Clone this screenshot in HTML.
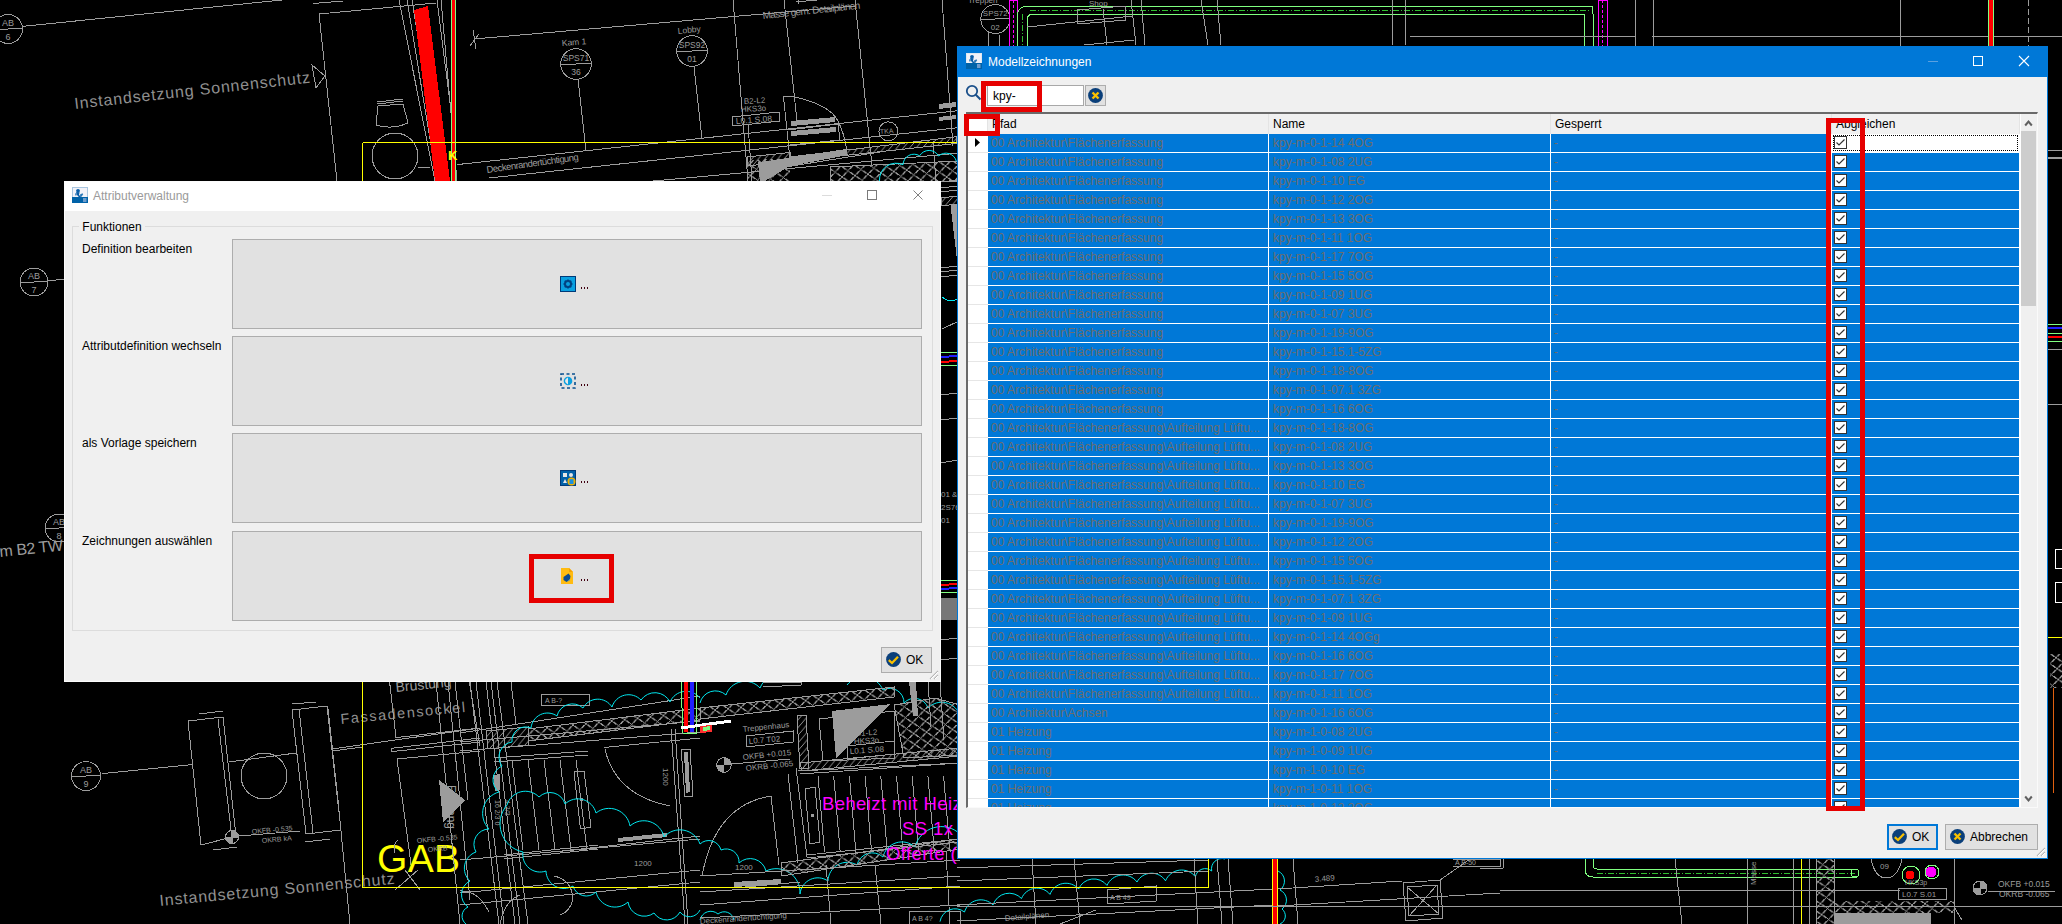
<!DOCTYPE html>
<html><head><meta charset="utf-8"><style>
html,body{margin:0;padding:0}
body{width:2062px;height:924px;position:relative;overflow:hidden;background:#000;font-family:"Liberation Sans",sans-serif;font-size:12px}
.t{position:absolute;white-space:nowrap;line-height:16px}
</style></head><body>
<svg width="2062" height="924" style="position:absolute;left:0;top:0" shape-rendering="crispEdges"><defs><pattern id="xh" width="13" height="11" patternUnits="userSpaceOnUse" patternTransform="rotate(-6)"><path d="M0,0 L13,11 M13,0 L0,11" stroke="#9c9c9c" stroke-width="1"/></pattern><pattern id="dh" width="7" height="7" patternUnits="userSpaceOnUse" patternTransform="rotate(-5)"><path d="M0,7 L7,0" stroke="#9c9c9c" stroke-width="1.3"/></pattern></defs><circle cx="8" cy="29" r="14.5" stroke="#9c9c9c" stroke-width="1" fill="none"/>
<path d="M-6.5,30 L22.5,28" stroke="#9c9c9c" stroke-width="1" fill="none"/>
<text x="8" y="26" font-size="9" fill="#9c9c9c" font-family="Liberation Sans" font-weight="normal" text-anchor="middle" transform="rotate(0 8 26)">AB</text>
<text x="8" y="40" font-size="9" fill="#9c9c9c" font-family="Liberation Sans" font-weight="normal" text-anchor="middle" transform="rotate(0 8 40)">6</text>
<path d="M22.5,26.4 L282,0" stroke="#9c9c9c" stroke-width="1" fill="none"/>
<text x="75" y="109" font-size="16" fill="#909090" font-family="Liberation Sans" font-weight="normal" text-anchor="start" transform="rotate(-6.4 75 109)" textLength="237" lengthAdjust="spacing">Instandsetzung Sonnenschutz</text>
<path d="M312,65 L325,76 L316,88 Z" stroke="#9c9c9c" stroke-width="1" fill="none"/>
<path d="M313,3.5 L343,1" stroke="#9c9c9c" stroke-width="1" fill="none"/>
<path d="M319,14 L436,3" stroke="#9c9c9c" stroke-width="1" fill="none"/>
<path d="M319,14 L337,181" stroke="#9c9c9c" stroke-width="1" fill="none"/>
<path d="M399,0 L435,181" stroke="#9c9c9c" stroke-width="1" fill="none"/>
<path d="M407,0 L437,181" stroke="#9c9c9c" stroke-width="1" fill="none"/>
<path d="M412,0 L441,181" stroke="#9c9c9c" stroke-width="1" fill="none"/>
<path d="M437,0 L451,111" stroke="#9c9c9c" stroke-width="1" fill="none"/>
<path d="M441,0 L457,181" stroke="#9c9c9c" stroke-width="1" fill="none"/>
<polygon points="414,10 428,6 450,181 435,181" fill="#ff0000" stroke="none"/>
<rect x="451" y="0" width="5" height="181" fill="#ff0000"/>
<path d="M451.5,0 L451.5,181" stroke="#80ff80" stroke-width="1" fill="none"/>
<path d="M455.5,0 L455.5,181" stroke="#80ff80" stroke-width="1" fill="none"/>
<path d="M470,46 L479,34" stroke="#9c9c9c" stroke-width="1" fill="none"/>
<path d="M473,30 L476,49" stroke="#9c9c9c" stroke-width="1" fill="none"/>
<path d="M474,39 L855,6" stroke="#9c9c9c" stroke-width="1" fill="none"/>
<text x="562" y="46" font-size="8.5" fill="#9c9c9c" font-family="Liberation Sans" font-weight="normal" text-anchor="start" transform="rotate(-4 562 46)">Kam 1</text>
<circle cx="576" cy="64" r="15.3" stroke="#9c9c9c" stroke-width="1" fill="none"/>
<path d="M560.7,65 L591.3,63" stroke="#9c9c9c" stroke-width="1" fill="none"/>
<text x="576" y="61" font-size="8.5" fill="#9c9c9c" font-family="Liberation Sans" font-weight="normal" text-anchor="middle" transform="rotate(0 576 61)">SPS71</text>
<text x="576" y="75" font-size="8.5" fill="#9c9c9c" font-family="Liberation Sans" font-weight="normal" text-anchor="middle" transform="rotate(0 576 75)">36</text>
<path d="M578,79 L586,151" stroke="#9c9c9c" stroke-width="1" fill="none"/>
<path d="M377,102 L403,99" stroke="#9c9c9c" stroke-width="1" fill="none"/>
<path d="M377,104 L403,101" stroke="#9c9c9c" stroke-width="1" fill="none"/>
<path d="M378,106 L403,104 L408,123 Q392,130 376,125 Z" stroke="#9c9c9c" stroke-width="1" fill="none"/>
<circle cx="395" cy="156" r="23" stroke="#9c9c9c" stroke-width="1" fill="none"/>
<text x="448" y="160" font-size="13" fill="#ffff00" font-family="Liberation Sans" font-weight="bold" text-anchor="start" transform="rotate(0 448 160)">K</text>
<path d="M457,164.6 L960,110.5" stroke="#9c9c9c" stroke-width="1" fill="none"/>
<path d="M489,178 L960,127.5" stroke="#9c9c9c" stroke-width="1" fill="none"/>
<text x="487" y="173" font-size="9.5" fill="#9c9c9c" font-family="Liberation Sans" font-weight="normal" text-anchor="start" transform="rotate(-8 487 173)" textLength="93" lengthAdjust="spacing">Deckenrandertüchtigung</text>
<path d="M418,167 L430,167" stroke="#9c9c9c" stroke-width="1" fill="none"/>
<path d="M733,0 L748,181" stroke="#9c9c9c" stroke-width="1" fill="none"/>
<path d="M784,0 L797,121" stroke="#9c9c9c" stroke-width="1" fill="none"/>
<path d="M855,0 L872,166" stroke="#9c9c9c" stroke-width="1" fill="none"/>
<path d="M942,0 L953,146" stroke="#9c9c9c" stroke-width="1" fill="none"/>
<text x="763" y="19" font-size="10" fill="#9c9c9c" font-family="Liberation Sans" font-weight="normal" text-anchor="start" transform="rotate(-6 763 19)" textLength="98" lengthAdjust="spacing">Masse gem. Detailplänen</text>
<path d="M796,2 L817,0" stroke="#9c9c9c" stroke-width="1" fill="none"/>
<path d="M798,0 L798,4" stroke="#9c9c9c" stroke-width="1" fill="none"/>
<text x="678" y="34" font-size="8.5" fill="#9c9c9c" font-family="Liberation Sans" font-weight="normal" text-anchor="start" transform="rotate(-6 678 34)">Lobby</text>
<circle cx="692" cy="51" r="15.3" stroke="#9c9c9c" stroke-width="1" fill="none"/>
<path d="M676.7,52 L707.3,50" stroke="#9c9c9c" stroke-width="1" fill="none"/>
<text x="692" y="48" font-size="8.5" fill="#9c9c9c" font-family="Liberation Sans" font-weight="normal" text-anchor="middle" transform="rotate(0 692 48)">SPS92</text>
<text x="692" y="62" font-size="8.5" fill="#9c9c9c" font-family="Liberation Sans" font-weight="normal" text-anchor="middle" transform="rotate(0 692 62)">01</text>
<path d="M694,67 L702,139" stroke="#9c9c9c" stroke-width="1" fill="none"/>
<text x="744" y="104" font-size="8" fill="#9c9c9c" font-family="Liberation Sans" font-weight="normal" text-anchor="start" transform="rotate(-3 744 104)">B2-L2</text>
<text x="741" y="112" font-size="8" fill="#9c9c9c" font-family="Liberation Sans" font-weight="normal" text-anchor="start" transform="rotate(-3 741 112)">HKS3o</text>
<path d="M732,117 L779,112 L780,121 L733,126 Z" stroke="#9c9c9c" stroke-width="1" fill="none"/>
<path d="M748,124 L752,181" stroke="#9c9c9c" stroke-width="1" fill="none"/>
<text x="736" y="124" font-size="8.5" fill="#9c9c9c" font-family="Liberation Sans" font-weight="normal" text-anchor="start" transform="rotate(-4 736 124)">L0.1  S.08</text>
<path d="M783,96 L795,97 Q830,105 838,121 Q845,135 847,152" stroke="#9c9c9c" stroke-width="1" fill="none"/>
<path d="M783.5,97 L790,159" stroke="#9c9c9c" stroke-width="1" fill="none"/>
<polygon points="791,121 835,117 835,122 791,126" fill="#9c9c9c" stroke="none"/>
<polygon points="791,131 836,127 836,132 791,136" fill="#9c9c9c" stroke="none"/>
<path d="M788,130 L838,124 L840,140 L790,145" stroke="#9c9c9c" stroke-width="1" fill="none"/>
<circle cx="888.4" cy="131.3" r="9.5" stroke="#9c9c9c" stroke-width="1" fill="none"/>
<text x="880" y="134" font-size="7" fill="#9c9c9c" font-family="Liberation Sans" font-weight="normal" text-anchor="start" transform="rotate(-4 880 134)">TKA</text>
<path d="M653,181 L960,153" stroke="#9c9c9c" stroke-width="1" fill="none"/>
<polygon points="758,162.5 846,149 848,155 790,166 765,181 760,181" fill="#9c9c9c" stroke="none"/>
<polygon points="790,157 956,136.8 956,143.5 790,161.4" fill="url(#dh)" stroke="#9c9c9c"/>
<polygon points="747,157 790,152.5 790,161.4 747,166" fill="url(#dh)" stroke="#9c9c9c"/>
<polygon points="747,160 790,158 790,181 747,181" fill="url(#xh)"/>
<polygon points="830,167 960,161 960,181 830,181" fill="url(#xh)" stroke="#9c9c9c"/>
<path d="M760,171 L880,152" stroke="#9c9c9c" stroke-width="1" fill="none"/>
<polygon points="938.6,104 956.4,102 956.4,107 938.6,109" fill="#9c9c9c" stroke="none"/>
<polygon points="938.6,117 956.4,115 956.4,119 938.6,121" fill="#9c9c9c" stroke="none"/>
<path d="M933,141 L936,181" stroke="#9c9c9c" stroke-width="1" fill="none"/>
<path d="M879.5,181 A16.6,16.6 0 0 1 903,164.7 A10.9,10.9 0 0 1 919.6,155.8 A11.0,11.0 0 0 1 938.6,156 A10.8,10.8 0 0 1 956.4,161.4" stroke="#00e8f0" stroke-width="1" fill="none" shape-rendering="auto"/>
<circle cx="34" cy="282" r="14" stroke="#9c9c9c" stroke-width="1" fill="none"/>
<path d="M20,283 L48,281" stroke="#9c9c9c" stroke-width="1" fill="none"/>
<text x="34" y="279" font-size="9" fill="#9c9c9c" font-family="Liberation Sans" font-weight="normal" text-anchor="middle" transform="rotate(0 34 279)">AB</text>
<text x="34" y="293" font-size="9" fill="#9c9c9c" font-family="Liberation Sans" font-weight="normal" text-anchor="middle" transform="rotate(0 34 293)">7</text>
<path d="M48,281 L64,279" stroke="#9c9c9c" stroke-width="1" fill="none"/>
<circle cx="59" cy="528" r="14" stroke="#9c9c9c" stroke-width="1" fill="none"/>
<path d="M45,529 L73,527" stroke="#9c9c9c" stroke-width="1" fill="none"/>
<text x="59" y="525" font-size="9" fill="#9c9c9c" font-family="Liberation Sans" font-weight="normal" text-anchor="middle" transform="rotate(0 59 525)">AB</text>
<text x="59" y="539" font-size="9" fill="#9c9c9c" font-family="Liberation Sans" font-weight="normal" text-anchor="middle" transform="rotate(0 59 539)">8</text>
<text x="0" y="557" font-size="16" fill="#9c9c9c" font-family="Liberation Sans" font-weight="normal" text-anchor="start" transform="rotate(-6 0 557)" textLength="64" lengthAdjust="spacing">m B2 TW</text>
<circle cx="86" cy="776" r="14.5" stroke="#9c9c9c" stroke-width="1" fill="none"/>
<path d="M71.5,777 L100.5,775" stroke="#9c9c9c" stroke-width="1" fill="none"/>
<text x="86" y="773" font-size="9" fill="#9c9c9c" font-family="Liberation Sans" font-weight="normal" text-anchor="middle" transform="rotate(0 86 773)">AB</text>
<text x="86" y="787" font-size="9" fill="#9c9c9c" font-family="Liberation Sans" font-weight="normal" text-anchor="middle" transform="rotate(0 86 787)">9</text>
<path d="M101.6,773.7 L192.7,764.5" stroke="#9c9c9c" stroke-width="1" fill="none"/>
<path d="M188,721 L223,717 L236,836 L201,845 Z" stroke="#9c9c9c" stroke-width="1" fill="none"/>
<path d="M218,719 L232,838" stroke="#9c9c9c" stroke-width="1" fill="none"/>
<path d="M199,714 L223,711" stroke="#9c9c9c" stroke-width="1" fill="none"/>
<path d="M213,850 L237,847" stroke="#9c9c9c" stroke-width="1" fill="none"/>
<circle cx="264" cy="776" r="23" stroke="#9c9c9c" stroke-width="1" fill="none"/>
<path d="M229,762 L296,753" stroke="#9c9c9c" stroke-width="1" fill="none"/>
<path d="M292,710 L327,706 L341,830 L306,834 Z" stroke="#9c9c9c" stroke-width="1" fill="none"/>
<path d="M299,709 L313,833" stroke="#9c9c9c" stroke-width="1" fill="none"/>
<path d="M292,704 L316,702" stroke="#9c9c9c" stroke-width="1" fill="none"/>
<path d="M305,842 L330,839" stroke="#9c9c9c" stroke-width="1" fill="none"/>
<path d="M332,751 L363,747" stroke="#9c9c9c" stroke-width="1" fill="none"/>
<circle cx="232" cy="837" r="6.5" stroke="#9c9c9c" stroke-width="1" fill="none"/>
<path d="M232,830.5 A6.5,6.5 0 0 1 238.5,837 L232,837 Z M232,843.5 A6.5,6.5 0 0 1 225.5,837 L232,837 Z" fill="#9c9c9c"/>
<path d="M225.5,837 L238.5,837" stroke="#9c9c9c" stroke-width="1" fill="none"/>
<path d="M232,830.5 L232,843.5" stroke="#9c9c9c" stroke-width="1" fill="none"/>
<path d="M239,836 L300,831" stroke="#9c9c9c" stroke-width="1" fill="none"/>
<text x="252" y="834" font-size="7" fill="#9c9c9c" font-family="Liberation Sans" font-weight="normal" text-anchor="start" transform="rotate(-5 252 834)">OKFB -0.535</text>
<text x="262" y="843" font-size="7" fill="#9c9c9c" font-family="Liberation Sans" font-weight="normal" text-anchor="start" transform="rotate(-5 262 843)">OKRB kA</text>
<text x="341" y="724" font-size="14.5" fill="#909090" font-family="Liberation Sans" font-weight="normal" text-anchor="start" transform="rotate(-5.5 341 724)" textLength="125" lengthAdjust="spacing">Fassadensockel</text>
<text x="396" y="692" font-size="14" fill="#9c9c9c" font-family="Liberation Sans" font-weight="normal" text-anchor="start" transform="rotate(-5.5 396 692)">Brüstung</text>
<text x="160" y="906" font-size="16" fill="#909090" font-family="Liberation Sans" font-weight="normal" text-anchor="start" transform="rotate(-5.4 160 906)" textLength="236" lengthAdjust="spacing">Instandsetzung Sonnenschutz</text>
<path d="M320,707 L327.7,706" stroke="#9c9c9c" stroke-width="1" fill="none"/>
<path d="M327.7,706 L338,800" stroke="#9c9c9c" stroke-width="1" fill="none"/>
<path d="M338,800 L350,924" stroke="#9c9c9c" stroke-width="1" fill="none"/>
<path d="M332,749 L480,728" stroke="#9c9c9c" stroke-width="1" fill="none"/>
<path d="M389.6,682 L396,737.6" stroke="#9c9c9c" stroke-width="1" fill="none"/>
<path d="M396,737.6 L480,728" stroke="#9c9c9c" stroke-width="1" fill="none"/>
<path d="M391,748.4 L480,738" stroke="#9c9c9c" stroke-width="1" fill="none"/>
<path d="M392,751.6 L480,742" stroke="#9c9c9c" stroke-width="1" fill="none"/>
<path d="M391,748.4 L392,751.6" stroke="#9c9c9c" stroke-width="1" fill="none"/>
<path d="M480,751 L397,759 L412,872" stroke="#9c9c9c" stroke-width="1" fill="none"/>
<path d="M455,682 L468,800" stroke="#9c9c9c" stroke-width="1" fill="none"/>
<path d="M469.4,682 L480,746" stroke="#9c9c9c" stroke-width="1" fill="none"/>
<path d="M0,924 L0,924" stroke="#9c9c9c" stroke-width="1" fill="none"/>
<text x="377" y="872" font-size="39" fill="#ffff00" font-family="Liberation Sans" font-weight="normal" text-anchor="start" transform="rotate(0 377 872)" textLength="83" lengthAdjust="spacing">GAB</text>
<polygon points="439,780 465,800 443,822" fill="#9c9c9c" stroke="none"/>
<text x="447" y="785" font-size="12" fill="#9c9c9c" font-family="Liberation Sans" font-weight="normal" text-anchor="start" transform="rotate(90 447 785)">Eingang</text>
<text x="417" y="843" font-size="7" fill="#9c9c9c" font-family="Liberation Sans" font-weight="normal" text-anchor="start" transform="rotate(-5 417 843)">OKFB -0.535</text>
<text x="428" y="852" font-size="7" fill="#9c9c9c" font-family="Liberation Sans" font-weight="normal" text-anchor="start" transform="rotate(-5 428 852)">OKRB -</text>
<path d="M395,853 Q392,845 398,840" stroke="#9c9c9c" stroke-width="1" fill="none"/>
<path d="M405,870 L420,890" stroke="#9c9c9c" stroke-width="1" fill="none"/>
<path d="M395,890 L418,870" stroke="#9c9c9c" stroke-width="1" fill="none"/>
<path d="M470,682 L499,924" stroke="#9c9c9c" stroke-width="1" fill="none"/>
<path d="M476,682 L504,924" stroke="#9c9c9c" stroke-width="1" fill="none"/>
<path d="M486,682 L515,924" stroke="#9c9c9c" stroke-width="1" fill="none"/>
<path d="M491,682 L520,924" stroke="#9c9c9c" stroke-width="1" fill="none"/>
<path d="M497,682 L528,924" stroke="#9c9c9c" stroke-width="1" fill="none"/>
<path d="M511,682 L516,724" stroke="#9c9c9c" stroke-width="1" fill="none"/>
<path d="M436,682 L460,924" stroke="#9c9c9c" stroke-width="1" fill="none"/>
<path d="M448,682 L470,900" stroke="#9c9c9c" stroke-width="1" fill="none"/>
<polygon points="528,729 700,708 700,720 528,741" fill="url(#xh)" stroke="#9c9c9c"/>
<polygon points="486,731 528,727 528,745 488,749" fill="url(#dh)" stroke="#9c9c9c"/>
<path d="M460,733 L700,696" stroke="#9c9c9c" stroke-width="1" fill="none"/>
<path d="M460,742 L700,721" stroke="#9c9c9c" stroke-width="1" fill="none"/>
<path d="M460,751 L700,732" stroke="#9c9c9c" stroke-width="1" fill="none"/>
<path d="M541,694.6 L589.7,694.6 L589.7,705 L541,705 Z" stroke="#9c9c9c" stroke-width="1" fill="none"/>
<text x="545" y="703" font-size="7" fill="#9c9c9c" font-family="Liberation Sans" font-weight="normal" text-anchor="start" transform="rotate(0 545 703)">A B-?</text>
<path d="M494,758 L588,751" stroke="#9c9c9c" stroke-width="1" fill="none"/>
<path d="M494,762 L588,755" stroke="#9c9c9c" stroke-width="1" fill="none"/>
<path d="M604,747.5 L700,738" stroke="#9c9c9c" stroke-width="1" fill="none"/>
<path d="M512,760 L523,850" stroke="#9c9c9c" stroke-width="1" fill="none"/>
<path d="M528,760 L539,850" stroke="#9c9c9c" stroke-width="1" fill="none"/>
<path d="M544,760 L555,850" stroke="#9c9c9c" stroke-width="1" fill="none"/>
<path d="M560,760 L571,850" stroke="#9c9c9c" stroke-width="1" fill="none"/>
<path d="M576,760 L587,850" stroke="#9c9c9c" stroke-width="1" fill="none"/>
<path d="M574,772 L584,771 L591,827 L580.5,829 Z" stroke="#9c9c9c" stroke-width="1" fill="none"/>
<rect x="580" y="798" width="3" height="3" fill="#9c9c9c"/>
<path d="M504,855 L598,845" stroke="#9c9c9c" stroke-width="1" fill="none"/>
<path d="M504,859 L598,849" stroke="#9c9c9c" stroke-width="1" fill="none"/>
<path d="M460,860 L700,839" stroke="#9c9c9c" stroke-width="1" fill="none"/>
<path d="M605,749 Q615,795 670,806" stroke="#9c9c9c" stroke-width="1" fill="none"/>
<path d="M681,749 L690,749 L693,796 L685,797 Z" stroke="#9c9c9c" stroke-width="1" fill="none"/>
<polygon points="684,752 688,752 690,792 686,793" fill="#9c9c9c" stroke="none"/>
<text x="663" y="768" font-size="8" fill="#9c9c9c" font-family="Liberation Sans" font-weight="normal" text-anchor="start" transform="rotate(90 663 768)">1200</text>
<polygon points="618,838 667,833 667,837 618,842" fill="#9c9c9c" stroke="none"/>
<path d="M553,852 L700,836" stroke="#9c9c9c" stroke-width="1" fill="none"/>
<text x="634" y="866" font-size="8" fill="#9c9c9c" font-family="Liberation Sans" font-weight="normal" text-anchor="start" transform="rotate(0 634 866)">1200</text>
<path d="M671,729 L685,924" stroke="#9c9c9c" stroke-width="1" fill="none"/>
<path d="M675,729 L688,924" stroke="#9c9c9c" stroke-width="1" fill="none"/>
<polygon points="493,775 500,774 500,790 495,791" fill="#9c9c9c" stroke="none"/>
<text x="495" y="800" font-size="7" fill="#9c9c9c" font-family="Liberation Sans" font-weight="normal" text-anchor="start" transform="rotate(90 495 800)">16 2/3 0</text>
<text x="505" y="800" font-size="7" fill="#9c9c9c" font-family="Liberation Sans" font-weight="normal" text-anchor="start" transform="rotate(90 505 800)">4 2/3</text>
<path d="M460,893 L700,870" stroke="#9c9c9c" stroke-width="1" fill="none"/>
<path d="M460,905 L700,882" stroke="#9c9c9c" stroke-width="1" fill="none"/>
<path d="M460,891 Q478,890 489,912" stroke="#9c9c9c" stroke-width="1" fill="none"/>
<path d="M554,876 Q572,880 573,899 Q570,912 560,915" stroke="#9c9c9c" stroke-width="1" fill="none"/>
<path d="M500,924 Q505,900 520,895" stroke="#9c9c9c" stroke-width="1" fill="none"/>
<path d="M700,698 A17.6,17.6 0 0 0 670,702 A16.9,16.9 0 0 0 641,700 A17.3,17.3 0 0 0 612,707 A16.8,16.8 0 0 0 583,708 A15.8,15.8 0 0 0 557,716 A16.6,16.6 0 0 0 531,728 A13.7,13.7 0 0 0 512,742 A15.1,15.1 0 0 0 502,766 A15.2,15.2 0 0 0 499,792 A22.2,22.2 0 0 0 489,829 A15.3,15.3 0 0 0 476,852 A17.2,17.2 0 0 0 470,881 A15.1,15.1 0 0 0 468,907 A9.9,9.9 0 0 0 466,924" stroke="#00e8f0" stroke-width="1" fill="none" shape-rendering="auto"/>
<path d="M507,805 A19.1,19.1 0 0 1 539,797 A15.6,15.6 0 0 1 565,804 A18.7,18.7 0 0 1 596,813 A21.1,21.1 0 0 1 630,826 A20.7,20.7 0 0 1 664,837 A21.3,21.3 0 0 1 700,844" stroke="#00e8f0" stroke-width="1" fill="none" shape-rendering="auto"/>
<path d="M507,805 A28.8,28.8 0 0 0 523,852 A17.3,17.3 0 0 0 546,871 A17.9,17.9 0 0 0 573,886 A13.8,13.8 0 0 0 596,892 A19.4,19.4 0 0 0 628,902 A16.4,16.4 0 0 0 654,913 A15.1,15.1 0 0 0 680,912 A11.7,11.7 0 0 0 700,910" stroke="#00e8f0" stroke-width="1" fill="none" shape-rendering="auto"/>
<rect x="684" y="682" width="4" height="50" fill="#ff0000"/>
<rect x="690" y="682" width="4" height="50" fill="#2020ff"/>
<path d="M681,682 L683,733 L696,733 L696,682" stroke="#80ff80" stroke-width="1" fill="none"/>
<path d="M681,728 L731,721" stroke="#ffffff" stroke-width="3" fill="none"/>
<polygon points="700,726 712,725 712,732 700,733" fill="#ff3030" stroke="none"/>
<polygon points="703,727 710,726 710,730 703,731" fill="#80ff80" stroke="none"/>
<path d="M700,703 A15.8,15.8 0 0 1 726,695 A20.1,20.1 0 0 1 760,688 A26.3,26.3 0 0 1 805,682" stroke="#00e8f0" stroke-width="1" fill="none" shape-rendering="auto"/>
<path d="M847,685 A21.1,21.1 0 0 1 883,690 A14.3,14.3 0 0 1 904,703 A14.2,14.2 0 0 1 928,708 A19.1,19.1 0 0 1 960,716" stroke="#00e8f0" stroke-width="1" fill="none" shape-rendering="auto"/>
<polygon points="700,708 894,687 894,697 700,719" fill="url(#xh)" stroke="#9c9c9c"/>
<polygon points="894,705 935,698 960,705 960,755 904,758" fill="url(#xh)" stroke="#9c9c9c"/>
<polygon points="797,716 806,715 809,768 800,769" fill="url(#dh)" stroke="#9c9c9c"/>
<polygon points="800,763 960,748 960,756 802,771" fill="url(#dh)" stroke="#9c9c9c"/>
<path d="M798,771 L960,763" stroke="#9c9c9c" stroke-width="1" fill="none"/>
<text x="743" y="732" font-size="8" fill="#9c9c9c" font-family="Liberation Sans" font-weight="normal" text-anchor="start" transform="rotate(-6 743 732)">Treppenhaus</text>
<path d="M746,736 L793,731 L793,742 L746,747 Z" stroke="#9c9c9c" stroke-width="1" fill="none"/>
<text x="749" y="744" font-size="8" fill="#9c9c9c" font-family="Liberation Sans" font-weight="normal" text-anchor="start" transform="rotate(-5 749 744)">L0.7  T02</text>
<circle cx="724" cy="765" r="7.3" stroke="#9c9c9c" stroke-width="1" fill="none"/>
<path d="M724,758 A7.3,7.3 0 0 1 731.3,765 L724,765 Z M724,772.3 A7.3,7.3 0 0 1 716.7,765 L724,765 Z" fill="#9c9c9c"/>
<path d="M731,764 L790,759" stroke="#9c9c9c" stroke-width="1" fill="none"/>
<text x="743" y="760" font-size="8" fill="#9c9c9c" font-family="Liberation Sans" font-weight="normal" text-anchor="start" transform="rotate(-6 743 760)">OKFB +0.015</text>
<text x="746" y="771" font-size="8" fill="#9c9c9c" font-family="Liberation Sans" font-weight="normal" text-anchor="start" transform="rotate(-6 746 771)">OKRB -0.065</text>
<path d="M702,876 Q715,805 771,796 L779,865" stroke="#9c9c9c" stroke-width="1" fill="none"/>
<path d="M788,774 L798,863" stroke="#9c9c9c" stroke-width="1" fill="none"/>
<path d="M796,768 L807,857" stroke="#9c9c9c" stroke-width="1" fill="none"/>
<path d="M805,789 L815,787 L820,842 L810,844 Z" stroke="#9c9c9c" stroke-width="1" fill="none"/>
<rect x="811" y="814" width="3" height="3" fill="#9c9c9c"/>
<path d="M818.0,776 L824.5,852" stroke="#9c9c9c" stroke-width="1" fill="none"/>
<path d="M833.7,776 L840.2,852" stroke="#9c9c9c" stroke-width="1" fill="none"/>
<path d="M849.4,776 L855.9,852" stroke="#9c9c9c" stroke-width="1" fill="none"/>
<path d="M865.1,776 L871.6,852" stroke="#9c9c9c" stroke-width="1" fill="none"/>
<path d="M880.8,776 L887.3,852" stroke="#9c9c9c" stroke-width="1" fill="none"/>
<path d="M896.5,776 L903.0,852" stroke="#9c9c9c" stroke-width="1" fill="none"/>
<path d="M912.2,776 L918.7,852" stroke="#9c9c9c" stroke-width="1" fill="none"/>
<path d="M927.9,776 L934.4,852" stroke="#9c9c9c" stroke-width="1" fill="none"/>
<path d="M943.6,776 L950.1,852" stroke="#9c9c9c" stroke-width="1" fill="none"/>
<path d="M800,774 L960,763" stroke="#9c9c9c" stroke-width="1" fill="none"/>
<path d="M807,855 L960,839" stroke="#9c9c9c" stroke-width="1" fill="none"/>
<path d="M807,858 L960,842" stroke="#9c9c9c" stroke-width="1" fill="none"/>
<polygon points="832,711 891,704 836,758" fill="#9c9c9c" stroke="none"/>
<path d="M819,719 L894,711 L895,758 L823,761 Z" stroke="#9c9c9c" stroke-width="1" fill="none"/>
<text x="856" y="736" font-size="8" fill="#9c9c9c" font-family="Liberation Sans" font-weight="normal" text-anchor="start" transform="rotate(-3 856 736)">B1-L2</text>
<text x="854" y="744" font-size="8" fill="#9c9c9c" font-family="Liberation Sans" font-weight="normal" text-anchor="start" transform="rotate(-3 854 744)">HKS3o</text>
<path d="M847,746 L894,741 L894,754 L848,759 Z" stroke="#9c9c9c" stroke-width="1" fill="none"/>
<text x="850" y="754" font-size="8" fill="#9c9c9c" font-family="Liberation Sans" font-weight="normal" text-anchor="start" transform="rotate(-4 850 754)">L0.1  S.08</text>
<polygon points="909,682 916,682 918,716 913,716" fill="#9c9c9c" stroke="none"/>
<path d="M928,682 L931,727" stroke="#9c9c9c" stroke-width="1" fill="none"/>
<path d="M940,682 L944,740" stroke="#9c9c9c" stroke-width="1" fill="none"/>
<path d="M700,844 A12.7,12.7 0 0 1 721,850 A12.9,12.9 0 0 1 739,863 A16.3,16.3 0 0 1 766,871 A23.8,23.8 0 0 1 800,894 A17.9,17.9 0 0 1 828,881 A19.2,19.2 0 0 1 857,865 A15.8,15.8 0 0 1 883,857 A19.4,19.4 0 0 1 915,847 A27.2,27.2 0 0 1 960,834" stroke="#00e8f0" stroke-width="1" fill="none" shape-rendering="auto"/>
<path d="M700,920 A11.0,11.0 0 0 1 718,914 A9.9,9.9 0 0 1 734,920" stroke="#00e8f0" stroke-width="1" fill="none" shape-rendering="auto"/>
<polygon points="781,863 960,839 960,849 781,876" fill="url(#xh)" stroke="#9c9c9c"/>
<path d="M700,876 L960,860" stroke="#9c9c9c" stroke-width="1" fill="none"/>
<path d="M700,892 L960,876" stroke="#9c9c9c" stroke-width="1" fill="none"/>
<path d="M700,905 L960,886" stroke="#9c9c9c" stroke-width="1" fill="none"/>
<path d="M700,918 L960,905" stroke="#9c9c9c" stroke-width="1" fill="none"/>
<path d="M826,865 L831,924" stroke="#9c9c9c" stroke-width="1" fill="none"/>
<path d="M875,865 L881,924" stroke="#9c9c9c" stroke-width="1" fill="none"/>
<path d="M946,852 L950,924" stroke="#9c9c9c" stroke-width="1" fill="none"/>
<text x="735" y="870" font-size="8" fill="#9c9c9c" font-family="Liberation Sans" font-weight="normal" text-anchor="start" transform="rotate(0 735 870)">1200</text>
<polygon points="734,882 781,879 781,884 734,887" fill="#9c9c9c" stroke="none"/>
<path d="M734,888 L800,882" stroke="#9c9c9c" stroke-width="1" fill="none"/>
<rect x="909" y="911" width="51" height="13" fill="none" stroke="#9c9c9c"/>
<text x="912" y="921" font-size="7" fill="#9c9c9c" font-family="Liberation Sans" font-weight="normal" text-anchor="start" transform="rotate(0 912 921)">A B 4?</text>
<text x="700" y="924" font-size="8" fill="#9c9c9c" font-family="Liberation Sans" font-weight="normal" text-anchor="start" transform="rotate(-4 700 924)">Deckenrandertüchtigung</text>
<path d="M763,682 L801,682 L801,685 L763,687" stroke="#9c9c9c" stroke-width="1" fill="none"/>
<text x="822" y="810" font-size="18.5" fill="#ff00ff" font-family="Liberation Sans" font-weight="normal" text-anchor="start" transform="rotate(0 822 810)" letter-spacing="0.4">Beheizt mit Heizkörper</text>
<text x="902" y="835" font-size="18.5" fill="#ff00ff" font-family="Liberation Sans" font-weight="normal" text-anchor="start" transform="rotate(0 902 835)" letter-spacing="0.4">SS 1x</text>
<text x="886" y="860" font-size="18.5" fill="#ff00ff" font-family="Liberation Sans" font-weight="normal" text-anchor="start" transform="rotate(0 886 860)" letter-spacing="0.4">Offerte (</text>
<path d="M941,182 L957,180" stroke="#9c9c9c" stroke-width="1" fill="none"/>
<path d="M941,188 L957,186" stroke="#9c9c9c" stroke-width="1" fill="none"/>
<path d="M941,192 L957,190" stroke="#9c9c9c" stroke-width="1" fill="none"/>
<polygon points="941,198 957,196 957,204 941,206" fill="url(#dh)" stroke="#9c9c9c"/>
<polygon points="950.5,205 957,205 957,260" fill="#9c9c9c" stroke="none"/>
<path d="M941,268 L957,266" stroke="#9c9c9c" stroke-width="1" fill="none"/>
<path d="M941,272 L957,270" stroke="#9c9c9c" stroke-width="1" fill="none"/>
<path d="M941,277 L957,275" stroke="#9c9c9c" stroke-width="1" fill="none"/>
<path d="M941.7,296.8 Q951,304 957,298.8" stroke="#00e8f0" stroke-width="1" fill="none"/>
<path d="M941.7,329 L957,322" stroke="#9c9c9c" stroke-width="1" fill="none"/>
<path d="M941,353 L957,352" stroke="#80ff80" stroke-width="1" fill="none"/>
<path d="M941,357 L957,356" stroke="#2020ff" stroke-width="2" fill="none"/>
<path d="M941,362 L957,361" stroke="#ff0000" stroke-width="2" fill="none"/>
<path d="M941,366 L957,365" stroke="#80ff80" stroke-width="1" fill="none"/>
<path d="M941,395 L957,393" stroke="#9c9c9c" stroke-width="1" fill="none"/>
<path d="M941,420 L957,418" stroke="#9c9c9c" stroke-width="1" fill="none"/>
<path d="M941,463 L957,460" stroke="#9c9c9c" stroke-width="1" fill="none"/>
<text x="941" y="497" font-size="8" fill="#9c9c9c" font-family="Liberation Sans" font-weight="normal" text-anchor="start" transform="rotate(0 941 497)">01 &</text>
<text x="941" y="510" font-size="8" fill="#9c9c9c" font-family="Liberation Sans" font-weight="normal" text-anchor="start" transform="rotate(0 941 510)">2S76</text>
<text x="941" y="523" font-size="8" fill="#9c9c9c" font-family="Liberation Sans" font-weight="normal" text-anchor="start" transform="rotate(0 941 523)">01</text>
<path d="M941,581 L957,580" stroke="#80ff80" stroke-width="1" fill="none"/>
<path d="M941,585 L957,584" stroke="#ff0000" stroke-width="2" fill="none"/>
<path d="M941,589 L957,588" stroke="#2020ff" stroke-width="2" fill="none"/>
<path d="M941,593 L957,592" stroke="#80ff80" stroke-width="1" fill="none"/>
<rect x="941" y="598" width="16" height="22" fill="#777"/>
<path d="M941,640 L957,638" stroke="#9c9c9c" stroke-width="1" fill="none"/>
<path d="M941,660 L957,658" stroke="#9c9c9c" stroke-width="1" fill="none"/>
<circle cx="995.3" cy="19" r="14.5" stroke="#9c9c9c" stroke-width="1" fill="none"/>
<path d="M980.8,20 L1009.8,18" stroke="#9c9c9c" stroke-width="1" fill="none"/>
<text x="995.3" y="16" font-size="8" fill="#9c9c9c" font-family="Liberation Sans" font-weight="normal" text-anchor="middle" transform="rotate(0 995.3 16)">SPS72</text>
<text x="995.3" y="30" font-size="8" fill="#9c9c9c" font-family="Liberation Sans" font-weight="normal" text-anchor="middle" transform="rotate(0 995.3 30)">02</text>
<rect x="1009" y="0" width="8" height="46" fill="none" stroke="#ff00ff"/>
<path d="M1013,0 L1013,46" stroke="#ff00ff" stroke-width="1" fill="none" stroke-dasharray="3 2"/>
<path d="M1017,46 L1017,18 Q1017,6 1029,6 L1592,6 Q1593,6 1593,14 L1593,46" stroke="#80ff80" stroke-width="1" fill="none"/>
<path d="M1027,46 L1027,20 Q1027,14 1033,14 L1584,14 L1584,46" stroke="#80ff80" stroke-width="1" fill="none"/>
<path d="M1030,10.5 L1590,10.5" stroke="#30c030" stroke-width="1" fill="none" stroke-dasharray="6 2 1 2"/>
<path d="M1022.5,14 L1022.5,46" stroke="#30c030" stroke-width="1" fill="none" stroke-dasharray="6 2 1 2"/>
<rect x="1598" y="0" width="9" height="46" fill="none" stroke="#ff00ff"/>
<path d="M1602,0 L1602,46" stroke="#ff00ff" stroke-width="1" fill="none" stroke-dasharray="3 2"/>
<path d="M1027,27 L1133,16" stroke="#9c9c9c" stroke-width="1" fill="none"/>
<path d="M1077,10 L1125,6 L1126,20 L1078,24 Z" stroke="#9c9c9c" stroke-width="1" fill="none"/>
<text x="1089" y="6" font-size="8" fill="#9c9c9c" font-family="Liberation Sans" font-weight="normal" text-anchor="start" transform="rotate(0 1089 6)">Shop</text>
<path d="M1103,9 L1107,45" stroke="#9c9c9c" stroke-width="1" fill="none"/>
<path d="M1131,0 L1136,45" stroke="#9c9c9c" stroke-width="1" fill="none"/>
<path d="M1141,0 L1145,45" stroke="#9c9c9c" stroke-width="1" fill="none"/>
<path d="M1201,0 L1208,45" stroke="#9c9c9c" stroke-width="1" fill="none"/>
<path d="M1217,0 L1221,45" stroke="#9c9c9c" stroke-width="1" fill="none"/>
<path d="M1392,0 L1392,45" stroke="#9c9c9c" stroke-width="1" fill="none"/>
<path d="M1405,0 L1405,45" stroke="#9c9c9c" stroke-width="1" fill="none"/>
<path d="M1410,36 L1635,36" stroke="#9c9c9c" stroke-width="1" fill="none"/>
<path d="M1652,36 L2062,36" stroke="#9c9c9c" stroke-width="1" fill="none"/>
<path d="M1635,0 L1635,46" stroke="#9c9c9c" stroke-width="1" fill="none"/>
<path d="M1653,0 L1653,46" stroke="#9c9c9c" stroke-width="1" fill="none"/>
<path d="M1900,0 L1900,46" stroke="#9c9c9c" stroke-width="1" fill="none"/>
<path d="M2028,0 L2028,46" stroke="#9c9c9c" stroke-width="1" fill="none" stroke-dasharray="6 3"/>
<rect x="1989" y="0" width="4" height="46" fill="#ff0000"/>
<path d="M1988.5,0 L1988.5,46" stroke="#80ff80" stroke-width="1" fill="none"/>
<path d="M1993.5,0 L1993.5,46" stroke="#80ff80" stroke-width="1" fill="none"/>
<path d="M1084,45 L1134,40" stroke="#9c9c9c" stroke-width="1" fill="none"/>
<text x="968" y="3" font-size="8" fill="#9c9c9c" font-family="Liberation Sans" font-weight="normal" text-anchor="start" transform="rotate(0 968 3)">Treppen</text>
<path d="M988,31 L988,46" stroke="#9c9c9c" stroke-width="1" fill="none"/>
<path d="M999,35 L999,46" stroke="#9c9c9c" stroke-width="1" fill="none"/>
<path d="M2048,150 L2062,150" stroke="#9c9c9c" stroke-width="1" fill="none"/>
<path d="M2048,158 L2062,158" stroke="#9c9c9c" stroke-width="2" fill="none"/>
<path d="M2048,324 L2062,324" stroke="#80ff80" stroke-width="1" fill="none"/>
<path d="M2048,328 L2062,328" stroke="#2020ff" stroke-width="2" fill="none"/>
<path d="M2048,333 L2062,333" stroke="#80ff80" stroke-width="1" fill="none"/>
<path d="M2048,337 L2062,337" stroke="#ff0000" stroke-width="2" fill="none"/>
<path d="M2048,341 L2062,341" stroke="#80ff80" stroke-width="1" fill="none"/>
<path d="M2048,349 L2062,349" stroke="#9c9c9c" stroke-width="1" fill="none"/>
<path d="M2048,404 L2062,404" stroke="#9c9c9c" stroke-width="1" fill="none"/>
<rect x="2055" y="549" width="8" height="19" fill="none" stroke="#fff"/>
<rect x="2055" y="582" width="8" height="20" fill="none" stroke="#fff"/>
<path d="M2048,637 L2062,637" stroke="#ffff00" stroke-width="1" fill="none"/>
<rect x="2050" y="654" width="12" height="34" fill="url(#xh)"/>
<path d="M2053,688 L2053,793" stroke="#e06010" stroke-width="1" fill="none"/>
<path d="M940,921.6 A15.3,15.3 0 0 1 964.5,912 A17.0,17.0 0 0 1 993,905 A17.0,17.0 0 0 1 1021.5,898.5 A16.7,16.7 0 0 1 1050,894.4 A16.9,16.9 0 0 1 1078.6,889 A16.6,16.6 0 0 1 1107,885.4 A17.5,17.5 0 0 1 1137,882 A16.5,16.5 0 0 1 1165.5,880.8 A17.5,17.5 0 0 1 1195.4,876.7 A10.0,10.0 0 0 1 1211.7,871 A10.4,10.4 0 0 1 1225,859" stroke="#00e8f0" stroke-width="1" fill="none" shape-rendering="auto"/>
<path d="M1278,871 A11.1,11.1 0 0 1 1280,890 A11.1,11.1 0 0 1 1282,909 A8.8,8.8 0 0 1 1280,924" stroke="#00e8f0" stroke-width="1" fill="none" shape-rendering="auto"/>
<path d="M957,868 L1209,860" stroke="#9c9c9c" stroke-width="1" fill="none"/>
<path d="M957,881 L1209,871" stroke="#9c9c9c" stroke-width="1" fill="none"/>
<path d="M957,905 L1274,889" stroke="#9c9c9c" stroke-width="1" fill="none"/>
<path d="M957,921 L1274,905" stroke="#9c9c9c" stroke-width="1" fill="none"/>
<path d="M1277,889 L1402,881" stroke="#9c9c9c" stroke-width="1" fill="none"/>
<path d="M1277,906 L1500,893" stroke="#9c9c9c" stroke-width="1" fill="none"/>
<path d="M1032,859 L1036,924" stroke="#9c9c9c" stroke-width="1" fill="none"/>
<path d="M1074,859 L1080,924" stroke="#9c9c9c" stroke-width="1" fill="none"/>
<path d="M1194,859 L1198,924" stroke="#9c9c9c" stroke-width="1" fill="none"/>
<path d="M1217,859 L1222,924" stroke="#9c9c9c" stroke-width="1" fill="none"/>
<path d="M1228,859 L1233,924" stroke="#9c9c9c" stroke-width="1" fill="none"/>
<path d="M1293,859 L1298,924" stroke="#9c9c9c" stroke-width="1" fill="none"/>
<path d="M1107,890 L1156,886 L1156,901 L1108,904 Z" stroke="#9c9c9c" stroke-width="1" fill="none"/>
<text x="1110" y="900" font-size="7" fill="#9c9c9c" font-family="Liberation Sans" font-weight="normal" text-anchor="start" transform="rotate(0 1110 900)">A B 49</text>
<path d="M1453,859 L1500,859 L1500,866 L1453,866" stroke="#9c9c9c" stroke-width="1" fill="none"/>
<text x="1455" y="865" font-size="7" fill="#9c9c9c" font-family="Liberation Sans" font-weight="normal" text-anchor="start" transform="rotate(0 1455 865)">A B-50</text>
<path d="M1403,883 L1440,880 L1443,918 L1406,921 Z" stroke="#9c9c9c" stroke-width="1" fill="none"/>
<path d="M1407,887 L1437,885 L1439,914 L1409,916 Z" stroke="#9c9c9c" stroke-width="1" fill="none"/>
<path d="M1407,887 L1439,914" stroke="#9c9c9c" stroke-width="1" fill="none"/>
<path d="M1437,885 L1409,916" stroke="#9c9c9c" stroke-width="1" fill="none"/>
<path d="M1440,880 L1470,859" stroke="#9c9c9c" stroke-width="1" fill="none"/>
<rect x="1273" y="859" width="4" height="65" fill="#ff0000"/>
<path d="M1272.5,859 L1272.5,924" stroke="#ffff00" stroke-width="1" fill="none"/>
<path d="M1277.5,859 L1277.5,924" stroke="#ffff00" stroke-width="1" fill="none"/>
<text x="1315" y="882" font-size="8" fill="#9c9c9c" font-family="Liberation Sans" font-weight="normal" text-anchor="start" transform="rotate(-5 1315 882)">3.489</text>
<text x="1005" y="921" font-size="8" fill="#9c9c9c" font-family="Liberation Sans" font-weight="normal" text-anchor="start" transform="rotate(-5 1005 921)">Detailplänen</text>
<path d="M1060,924 L1096,910" stroke="#9c9c9c" stroke-width="1" fill="none"/>
<path d="M1585,859 L1585,869 Q1585,877 1593,877 L1857,877" stroke="#80ff80" stroke-width="1" fill="none"/>
<path d="M1593,859 L1593,866 Q1593,869 1597,869 L1857,869" stroke="#80ff80" stroke-width="1" fill="none"/>
<path d="M1597,873 L1855,873" stroke="#30c030" stroke-width="1" fill="none" stroke-dasharray="6 2 1 2"/>
<circle cx="1855" cy="873" r="4" stroke="#80ff80" stroke-width="1" fill="none"/>
<path d="M1801.5,859 L1801.5,924" stroke="#ffff00" stroke-width="1" fill="none"/>
<path d="M1500,890 L1900,890" stroke="#9c9c9c" stroke-width="1" fill="none"/>
<path d="M957,906.5 L2062,906.5" stroke="#9c9c9c" stroke-width="1" fill="none"/>
<path d="M1747,859 L1747,924" stroke="#9c9c9c" stroke-width="1" fill="none"/>
<path d="M1793,859 L1793,924" stroke="#9c9c9c" stroke-width="1" fill="none"/>
<path d="M1809,859 L1809,924" stroke="#9c9c9c" stroke-width="1" fill="none"/>
<path d="M1816,859 L1816,924" stroke="#9c9c9c" stroke-width="1" fill="none"/>
<path d="M1834,859 L1834,924" stroke="#9c9c9c" stroke-width="1" fill="none"/>
<path d="M1954,859 L1954,924" stroke="#9c9c9c" stroke-width="1" fill="none"/>
<rect x="1816" y="859" width="18" height="65" fill="url(#xh)"/>
<rect x="1834" y="901" width="120" height="12" fill="url(#xh)"/>
<polygon points="1834,913 1931,913 1931,924 1834,924" fill="#9c9c9c"/>
<path d="M1871,859 Q1875,878 1886,878 Q1898,878 1902,859" stroke="#9c9c9c" stroke-width="1" fill="none"/>
<text x="1880" y="869" font-size="8" fill="#9c9c9c" font-family="Liberation Sans" font-weight="normal" text-anchor="start" transform="rotate(0 1880 869)">09</text>
<circle cx="1911" cy="875" r="9" stroke="#80ff80" stroke-width="1" fill="none"/>
<circle cx="1910" cy="875" r="4" stroke="#ff0000" stroke-width="1" fill="#ff0000"/>
<circle cx="1932" cy="872" r="7" stroke="#80ff80" stroke-width="1" fill="none"/>
<circle cx="1931" cy="872" r="5" stroke="#ff00ff" stroke-width="1" fill="#ff00ff"/>
<path d="M1898,888 L1946,888 L1946,899 L1898,899 Z" stroke="#9c9c9c" stroke-width="1" fill="none"/>
<text x="1902" y="897" font-size="8" fill="#9c9c9c" font-family="Liberation Sans" font-weight="normal" text-anchor="start" transform="rotate(0 1902 897)">L0.7  S.01</text>
<text x="1905" y="885" font-size="7" fill="#9c9c9c" font-family="Liberation Sans" font-weight="normal" text-anchor="start" transform="rotate(0 1905 885)">HKS3p</text>
<circle cx="1980" cy="888" r="7" stroke="#9c9c9c" stroke-width="1" fill="none"/>
<path d="M1973,888 L1987,888" stroke="#9c9c9c" stroke-width="1" fill="none"/>
<path d="M1980,881 L1980,895" stroke="#9c9c9c" stroke-width="1" fill="none"/>
<path d="M1980,881 A7,7 0 0 1 1987,888 L1980,888 Z M1980,895 A7,7 0 0 1 1973,888 L1980,888 Z" fill="#9c9c9c"/>
<text x="1998" y="887" font-size="8.5" fill="#9c9c9c" font-family="Liberation Sans" font-weight="normal" text-anchor="start" transform="rotate(0 1998 887)">OKFB +0.015</text>
<text x="1999" y="897" font-size="8.5" fill="#9c9c9c" font-family="Liberation Sans" font-weight="normal" text-anchor="start" transform="rotate(0 1999 897)">OKRB -0.065</text>
<path d="M1988,891 L2055,891" stroke="#9c9c9c" stroke-width="1" fill="none"/>
<path d="M1503,859 L1503,868" stroke="#9c9c9c" stroke-width="1" fill="none"/>
<path d="M1480,868 L1503,868" stroke="#9c9c9c" stroke-width="1" fill="none"/>
<path d="M1675,859 L1682,924" stroke="#9c9c9c" stroke-width="1" fill="none"/>
<text x="1756" y="885" font-size="8" fill="#9c9c9c" font-family="Liberation Sans" font-weight="normal" text-anchor="start" transform="rotate(-90 1756 885)">Masse</text>
<path d="M1954,907 L1962,920" stroke="#9c9c9c" stroke-width="1" fill="none"/>
<path d="M363,142.5 L960,142.5" stroke="#ffff00" stroke-width="1" fill="none"/>
<path d="M362.5,142.5 L362.5,887.5" stroke="#ffff00" stroke-width="1" fill="none"/>
<path d="M362.5,887.5 L1208.5,887.5" stroke="#ffff00" stroke-width="1" fill="none"/>
<path d="M1208.5,859 L1208.5,887.5" stroke="#ffff00" stroke-width="1" fill="none"/></svg>
<div style="position:absolute;left:64px;top:181px;width:877px;height:501px;background:#f0f0f0;border:0;box-shadow:inset 0 0 0 1px #fcfcfc"></div>
<div style="position:absolute;left:65px;top:182px;width:875px;height:29px;background:#fff"></div>
<svg width="16" height="16" viewBox="0 0 16 16" style="position:absolute;left:72px;top:187px"><rect x="0.5" y="0.5" width="15" height="15" fill="#f2f2f8" stroke="#a9c6e0" stroke-width="1"/><rect x="0" y="10" width="16" height="6" fill="#0062a8"/><rect x="11" y="11" width="3.5" height="4" fill="#6f9ccc"/><circle cx="6" cy="3.8" r="1.9" fill="#0a5ea8"/><path d="M4.2 5 L7.5 5.2 L7 8 L8.8 9.5 L7.5 11 L5.6 8.6 L4.5 8 Z" fill="#0a5ea8"/><path d="M8 7.5 L10.5 6.2 L11.2 7.2 L9.5 9.8 L8.2 10Z" fill="#2a78b8"/><path d="M3 6.5 L4.5 6 L4.4 8.5 L3.2 8.6Z" fill="#4a88c0"/></svg>
<div class="t" style="left:93px;top:188px;color:#9a9a9a">Attributverwaltung</div>
<div style="position:absolute;left:822px;top:195px;width:10px;height:1px;background:#dcdcdc"></div>
<div style="position:absolute;left:867px;top:190px;width:10px;height:10px;border:1px solid #7a7a7a;box-sizing:border-box"></div>
<svg width="12" height="12" style="position:absolute;left:912px;top:189px"><path d="M1.5 1.5 L10.5 10.5 M10.5 1.5 L1.5 10.5" stroke="#808080" stroke-width="1"/></svg>
<div style="position:absolute;left:72px;top:226px;width:861px;height:405px;border:1px solid #dcdcdc;box-sizing:border-box"></div>
<div class="t" style="left:79px;top:219px;background:#f0f0f0;color:#000">&nbsp;Funktionen&nbsp;</div>
<div class="t" style="left:82px;top:241px;color:#000">Definition bearbeiten</div>
<div style="position:absolute;left:232px;top:239px;width:690px;height:90px;background:#e1e1e1;border:1px solid #adadad;box-sizing:border-box"></div>
<svg width="16" height="16" viewBox="0 0 16 16" style="position:absolute;left:560px;top:276px"><rect x="0.5" y="0.5" width="15" height="15" fill="#0aa0e0" stroke="#003a78" stroke-width="1"/><circle cx="8" cy="8" r="3.2" fill="none" stroke="#004080" stroke-width="1.6"/><g stroke="#004080" stroke-width="1.6"><line x1="8" y1="3.5" x2="8" y2="12.5"/><line x1="3.5" y1="8" x2="12.5" y2="8"/><line x1="4.8" y1="4.8" x2="11.2" y2="11.2"/><line x1="11.2" y1="4.8" x2="4.8" y2="11.2"/></g><circle cx="8" cy="8" r="2" fill="#0aa0e0"/></svg>
<div style="position:absolute;left:581px;top:287px;width:8px;height:2px;background:linear-gradient(90deg,#400010 0 1px,transparent 1px 3px,#400010 3px 4px,transparent 4px 6px,#400010 6px 7px,transparent 7px)"></div>
<div class="t" style="left:82px;top:338px;color:#000">Attributdefinition wechseln</div>
<div style="position:absolute;left:232px;top:336px;width:690px;height:90px;background:#e1e1e1;border:1px solid #adadad;box-sizing:border-box"></div>
<svg width="16" height="16" viewBox="0 0 16 16" style="position:absolute;left:560px;top:373px"><rect x="1" y="1" width="14" height="14" fill="none" stroke="#0a5090" stroke-width="1.6" stroke-dasharray="3 2.5"/><circle cx="8" cy="8" r="4.3" fill="#0aa0e0"/><path d="M8 4.6 L8 11.4 Q5 10 5 8 Q5 6 8 4.6Z" fill="#e8e8e8"/></svg>
<div style="position:absolute;left:581px;top:384px;width:8px;height:2px;background:linear-gradient(90deg,#400010 0 1px,transparent 1px 3px,#400010 3px 4px,transparent 4px 6px,#400010 6px 7px,transparent 7px)"></div>
<div class="t" style="left:82px;top:435px;color:#000">als Vorlage speichern</div>
<div style="position:absolute;left:232px;top:433px;width:690px;height:90px;background:#e1e1e1;border:1px solid #adadad;box-sizing:border-box"></div>
<svg width="16" height="16" viewBox="0 0 16 16" style="position:absolute;left:560px;top:470px"><rect x="0.5" y="0.5" width="15" height="15" fill="#0060a8" stroke="#003a78" stroke-width="1"/><rect x="3" y="3" width="4" height="4" fill="#e6e6e6"/><circle cx="11" cy="5" r="2" fill="#e6e6e6"/><path d="M5 9 L7 13 L3 13Z" fill="#e6e6e6"/><circle cx="11.5" cy="11.5" r="4" fill="#f0b000"/><rect x="9.5" y="9.2" width="4" height="4.8" fill="#1a90e0"/></svg>
<div style="position:absolute;left:581px;top:481px;width:8px;height:2px;background:linear-gradient(90deg,#400010 0 1px,transparent 1px 3px,#400010 3px 4px,transparent 4px 6px,#400010 6px 7px,transparent 7px)"></div>
<div class="t" style="left:82px;top:533px;color:#000">Zeichnungen auswählen</div>
<div style="position:absolute;left:232px;top:531px;width:690px;height:90px;background:#e1e1e1;border:1px solid #adadad;box-sizing:border-box"></div>
<svg width="16" height="16" viewBox="0 0 16 16" style="position:absolute;left:561px;top:568px"><path d="M0 0 L8 0 L12 4 L12 16 L0 16Z" fill="#ffbb10"/><path d="M8 0 L12 4 L8 4Z" fill="#f5a000"/><path d="M2.5 9 L7.5 5.5 L9.5 8 L9 11 L5.5 14 L2.5 12Z" fill="#0a4a90"/><path d="M5.5 14 L9 11 L8.5 12.5Z" fill="#1a90e0"/></svg>
<div style="position:absolute;left:581px;top:579px;width:8px;height:2px;background:linear-gradient(90deg,#400010 0 1px,transparent 1px 3px,#400010 3px 4px,transparent 4px 6px,#400010 6px 7px,transparent 7px)"></div>
<div style="position:absolute;left:529px;top:554px;width:75px;height:39px;border:5px solid #e60000"></div>
<div style="position:absolute;left:881px;top:647px;width:51px;height:26px;background:#e1e1e1;border:1px solid #adadad;box-sizing:border-box"></div>
<svg width="16" height="16" viewBox="0 0 16 16" style="position:absolute;left:886px;top:652px"><circle cx="7.5" cy="7.5" r="7.4" fill="#0a3f7a"/><path d="M2.8 8.2 L6 11 L12 4.8" fill="none" stroke="#f8c000" stroke-width="2.3"/></svg>
<div class="t" style="left:906px;top:652px;color:#000">OK</div>
<svg width="12" height="12" viewBox="0 0 12 12" style="position:absolute;left:927px;top:668px"><path d="M11 3 L3 11 M11 7 L7 11" stroke="#b8b8b8" stroke-width="1.2"/><path d="M11 4 L4 11 M11 8 L8 11" stroke="#fff" stroke-width="1"/></svg>
<div style="position:absolute;left:957px;top:46px;width:1091px;height:813px;background:#f0f0f0;box-shadow:inset 0 0 0 1px #0078d7"></div>
<div style="position:absolute;left:957px;top:46px;width:1091px;height:31px;background:#0078d7"></div>
<svg width="16" height="16" viewBox="0 0 16 16" style="position:absolute;left:966px;top:53px"><rect x="0.5" y="0.5" width="15" height="15" fill="#f2f2f8" stroke="#dfe8f0" stroke-width="1"/><rect x="0" y="10" width="16" height="6" fill="#0062a8"/><rect x="11" y="11" width="3.5" height="4" fill="#6f9ccc"/><circle cx="6" cy="3.8" r="1.9" fill="#0a5ea8"/><path d="M4.2 5 L7.5 5.2 L7 8 L8.8 9.5 L7.5 11 L5.6 8.6 L4.5 8 Z" fill="#0a5ea8"/><path d="M8 7.5 L10.5 6.2 L11.2 7.2 L9.5 9.8 L8.2 10Z" fill="#2a78b8"/><path d="M3 6.5 L4.5 6 L4.4 8.5 L3.2 8.6Z" fill="#4a88c0"/></svg>
<div class="t" style="left:988px;top:54px;color:#fff">Modellzeichnungen</div>
<div style="position:absolute;left:1928px;top:61px;width:10px;height:1px;background:#5aa0e0"></div>
<div style="position:absolute;left:1973px;top:56px;width:10px;height:10px;border:1px solid #fff;box-sizing:border-box"></div>
<svg width="12" height="12" style="position:absolute;left:2018px;top:55px"><path d="M1 1 L11 11 M11 1 L1 11" stroke="#fff" stroke-width="1.1"/></svg>
<svg width="18" height="18" style="position:absolute;left:965px;top:84px"><circle cx="7" cy="7" r="5.2" fill="none" stroke="#1a4f8a" stroke-width="1.8"/><line x1="10.8" y1="10.8" x2="15.5" y2="15.5" stroke="#1a4f8a" stroke-width="2"/></svg>
<div style="position:absolute;left:987px;top:85px;width:97px;height:21px;background:#fff;border:1px solid #a8a8a8;box-sizing:border-box"></div>
<div class="t" style="left:993px;top:88px;color:#000">kpy-</div>
<div style="position:absolute;left:1085px;top:85px;width:21px;height:21px;background:#e1e1e1;border:1px solid #adadad;box-sizing:border-box"></div>
<svg width="16" height="16" viewBox="0 0 16 16" style="position:absolute;left:1088px;top:88px"><circle cx="7.5" cy="7.5" r="7.4" fill="#0a3f7a"/><path d="M4.5 4.5 L10.5 10.5 M10.5 4.5 L4.5 10.5" fill="none" stroke="#f8c000" stroke-width="2.4"/></svg>
<div style="position:absolute;left:966px;top:112px;width:1072px;height:696px;background:#fff;border-top:2px solid #6a6a6a;border-left:2px solid #6a6a6a;border-right:1px solid #fafafa;border-bottom:1px solid #fafafa;box-sizing:border-box"></div>
<div style="position:absolute;left:987px;top:114px;width:1033px;height:20px;background:#f0f0f0"></div>
<div style="position:absolute;left:1268px;top:114px;width:1px;height:20px;background:#e4e4e4"></div>
<div style="position:absolute;left:1550px;top:114px;width:1px;height:20px;background:#e4e4e4"></div>
<div style="position:absolute;left:1831px;top:114px;width:1px;height:20px;background:#e4e4e4"></div>
<div style="position:absolute;left:2019px;top:114px;width:1px;height:20px;background:#e4e4e4"></div>
<div style="position:absolute;left:987px;top:114px;width:1px;height:20px;background:#e4e4e4"></div>
<div class="t" style="left:992px;top:116px;color:#000">Pfad</div>
<div class="t" style="left:1273px;top:116px;color:#000">Name</div>
<div class="t" style="left:1555px;top:116px;color:#000">Gesperrt</div>
<div class="t" style="left:1836px;top:116px;color:#000">Abgleichen</div>
<div style="position:absolute;left:988px;top:134px;width:1031px;height:673px;background:#fff;overflow:hidden"></div>
<div style="position:absolute;left:0;top:0;width:2062px;height:807px;overflow:hidden"><div style="position:absolute;left:988px;top:134px;width:1031px;height:18px;background:#0078d7"></div>
<div style="position:absolute;left:968px;top:152px;width:20px;height:1px;background:#e6e6e6"></div>
<div class="t" style="left:991px;top:135px;color:#6d6d6d">00 Architektur\Flächenerfassung</div>
<div class="t" style="left:1273px;top:135px;color:#6d6d6d">kpy-m-0-1-14 4OG</div>
<div class="t" style="left:1554px;top:135px;color:#6d6d6d">-</div>
<div style="position:absolute;left:1831px;top:134px;width:188px;height:18px;background:#fff"></div>
<div style="position:absolute;left:1833px;top:135px;width:185px;height:16px;border:1px dotted #000;box-sizing:border-box"></div>
<svg width="13" height="13" viewBox="0 0 13 13" style="position:absolute;left:1834px;top:136px"><rect x="0.5" y="0.5" width="12" height="12" fill="#fff" stroke="#333" stroke-width="1"/><path d="M2.5 6.5 L5 9 L10.5 3.5" fill="none" stroke="#333" stroke-width="1.2"/></svg>
<div style="position:absolute;left:988px;top:153px;width:1031px;height:18px;background:#0078d7"></div>
<div style="position:absolute;left:968px;top:171px;width:20px;height:1px;background:#e6e6e6"></div>
<div class="t" style="left:991px;top:154px;color:#6d6d6d">00 Architektur\Flächenerfassung</div>
<div class="t" style="left:1273px;top:154px;color:#6d6d6d">kpy-m-0-1-08 2UG</div>
<div class="t" style="left:1554px;top:154px;color:#6d6d6d">-</div>
<svg width="13" height="13" viewBox="0 0 13 13" style="position:absolute;left:1834px;top:155px"><rect x="0.5" y="0.5" width="12" height="12" fill="#fff" stroke="#333" stroke-width="1"/><path d="M2.5 6.5 L5 9 L10.5 3.5" fill="none" stroke="#333" stroke-width="1.2"/></svg>
<div style="position:absolute;left:988px;top:172px;width:1031px;height:18px;background:#0078d7"></div>
<div style="position:absolute;left:968px;top:190px;width:20px;height:1px;background:#e6e6e6"></div>
<div class="t" style="left:991px;top:173px;color:#6d6d6d">00 Architektur\Flächenerfassung</div>
<div class="t" style="left:1273px;top:173px;color:#6d6d6d">kpy-m-0-1-10 EG</div>
<div class="t" style="left:1554px;top:173px;color:#6d6d6d">-</div>
<svg width="13" height="13" viewBox="0 0 13 13" style="position:absolute;left:1834px;top:174px"><rect x="0.5" y="0.5" width="12" height="12" fill="#fff" stroke="#333" stroke-width="1"/><path d="M2.5 6.5 L5 9 L10.5 3.5" fill="none" stroke="#333" stroke-width="1.2"/></svg>
<div style="position:absolute;left:988px;top:191px;width:1031px;height:18px;background:#0078d7"></div>
<div style="position:absolute;left:968px;top:209px;width:20px;height:1px;background:#e6e6e6"></div>
<div class="t" style="left:991px;top:192px;color:#6d6d6d">00 Architektur\Flächenerfassung</div>
<div class="t" style="left:1273px;top:192px;color:#6d6d6d">kpy-m-0-1-12 2OG</div>
<div class="t" style="left:1554px;top:192px;color:#6d6d6d">-</div>
<svg width="13" height="13" viewBox="0 0 13 13" style="position:absolute;left:1834px;top:193px"><rect x="0.5" y="0.5" width="12" height="12" fill="#fff" stroke="#333" stroke-width="1"/><path d="M2.5 6.5 L5 9 L10.5 3.5" fill="none" stroke="#333" stroke-width="1.2"/></svg>
<div style="position:absolute;left:988px;top:210px;width:1031px;height:18px;background:#0078d7"></div>
<div style="position:absolute;left:968px;top:228px;width:20px;height:1px;background:#e6e6e6"></div>
<div class="t" style="left:991px;top:211px;color:#6d6d6d">00 Architektur\Flächenerfassung</div>
<div class="t" style="left:1273px;top:211px;color:#6d6d6d">kpy-m-0-1-13 3OG</div>
<div class="t" style="left:1554px;top:211px;color:#6d6d6d">-</div>
<svg width="13" height="13" viewBox="0 0 13 13" style="position:absolute;left:1834px;top:212px"><rect x="0.5" y="0.5" width="12" height="12" fill="#fff" stroke="#333" stroke-width="1"/><path d="M2.5 6.5 L5 9 L10.5 3.5" fill="none" stroke="#333" stroke-width="1.2"/></svg>
<div style="position:absolute;left:988px;top:229px;width:1031px;height:18px;background:#0078d7"></div>
<div style="position:absolute;left:968px;top:247px;width:20px;height:1px;background:#e6e6e6"></div>
<div class="t" style="left:991px;top:230px;color:#6d6d6d">00 Architektur\Flächenerfassung</div>
<div class="t" style="left:1273px;top:230px;color:#6d6d6d">kpy-m-0-1-11 1OG</div>
<div class="t" style="left:1554px;top:230px;color:#6d6d6d">-</div>
<svg width="13" height="13" viewBox="0 0 13 13" style="position:absolute;left:1834px;top:231px"><rect x="0.5" y="0.5" width="12" height="12" fill="#fff" stroke="#333" stroke-width="1"/><path d="M2.5 6.5 L5 9 L10.5 3.5" fill="none" stroke="#333" stroke-width="1.2"/></svg>
<div style="position:absolute;left:988px;top:248px;width:1031px;height:18px;background:#0078d7"></div>
<div style="position:absolute;left:968px;top:266px;width:20px;height:1px;background:#e6e6e6"></div>
<div class="t" style="left:991px;top:249px;color:#6d6d6d">00 Architektur\Flächenerfassung</div>
<div class="t" style="left:1273px;top:249px;color:#6d6d6d">kpy-m-0-1-17 7OG</div>
<div class="t" style="left:1554px;top:249px;color:#6d6d6d">-</div>
<svg width="13" height="13" viewBox="0 0 13 13" style="position:absolute;left:1834px;top:250px"><rect x="0.5" y="0.5" width="12" height="12" fill="#fff" stroke="#333" stroke-width="1"/><path d="M2.5 6.5 L5 9 L10.5 3.5" fill="none" stroke="#333" stroke-width="1.2"/></svg>
<div style="position:absolute;left:988px;top:267px;width:1031px;height:18px;background:#0078d7"></div>
<div style="position:absolute;left:968px;top:285px;width:20px;height:1px;background:#e6e6e6"></div>
<div class="t" style="left:991px;top:268px;color:#6d6d6d">00 Architektur\Flächenerfassung</div>
<div class="t" style="left:1273px;top:268px;color:#6d6d6d">kpy-m-0-1-15 5OG</div>
<div class="t" style="left:1554px;top:268px;color:#6d6d6d">-</div>
<svg width="13" height="13" viewBox="0 0 13 13" style="position:absolute;left:1834px;top:269px"><rect x="0.5" y="0.5" width="12" height="12" fill="#fff" stroke="#333" stroke-width="1"/><path d="M2.5 6.5 L5 9 L10.5 3.5" fill="none" stroke="#333" stroke-width="1.2"/></svg>
<div style="position:absolute;left:988px;top:286px;width:1031px;height:18px;background:#0078d7"></div>
<div style="position:absolute;left:968px;top:304px;width:20px;height:1px;background:#e6e6e6"></div>
<div class="t" style="left:991px;top:287px;color:#6d6d6d">00 Architektur\Flächenerfassung</div>
<div class="t" style="left:1273px;top:287px;color:#6d6d6d">kpy-m-0-1-09 1UG</div>
<div class="t" style="left:1554px;top:287px;color:#6d6d6d">-</div>
<svg width="13" height="13" viewBox="0 0 13 13" style="position:absolute;left:1834px;top:288px"><rect x="0.5" y="0.5" width="12" height="12" fill="#fff" stroke="#333" stroke-width="1"/><path d="M2.5 6.5 L5 9 L10.5 3.5" fill="none" stroke="#333" stroke-width="1.2"/></svg>
<div style="position:absolute;left:988px;top:305px;width:1031px;height:18px;background:#0078d7"></div>
<div style="position:absolute;left:968px;top:323px;width:20px;height:1px;background:#e6e6e6"></div>
<div class="t" style="left:991px;top:306px;color:#6d6d6d">00 Architektur\Flächenerfassung</div>
<div class="t" style="left:1273px;top:306px;color:#6d6d6d">kpy-m-0-1-07 3UG</div>
<div class="t" style="left:1554px;top:306px;color:#6d6d6d">-</div>
<svg width="13" height="13" viewBox="0 0 13 13" style="position:absolute;left:1834px;top:307px"><rect x="0.5" y="0.5" width="12" height="12" fill="#fff" stroke="#333" stroke-width="1"/><path d="M2.5 6.5 L5 9 L10.5 3.5" fill="none" stroke="#333" stroke-width="1.2"/></svg>
<div style="position:absolute;left:988px;top:324px;width:1031px;height:18px;background:#0078d7"></div>
<div style="position:absolute;left:968px;top:342px;width:20px;height:1px;background:#e6e6e6"></div>
<div class="t" style="left:991px;top:325px;color:#6d6d6d">00 Architektur\Flächenerfassung</div>
<div class="t" style="left:1273px;top:325px;color:#6d6d6d">kpy-m-0-1-19-9OG</div>
<div class="t" style="left:1554px;top:325px;color:#6d6d6d">-</div>
<svg width="13" height="13" viewBox="0 0 13 13" style="position:absolute;left:1834px;top:326px"><rect x="0.5" y="0.5" width="12" height="12" fill="#fff" stroke="#333" stroke-width="1"/><path d="M2.5 6.5 L5 9 L10.5 3.5" fill="none" stroke="#333" stroke-width="1.2"/></svg>
<div style="position:absolute;left:988px;top:343px;width:1031px;height:18px;background:#0078d7"></div>
<div style="position:absolute;left:968px;top:361px;width:20px;height:1px;background:#e6e6e6"></div>
<div class="t" style="left:991px;top:344px;color:#6d6d6d">00 Architektur\Flächenerfassung</div>
<div class="t" style="left:1273px;top:344px;color:#6d6d6d">kpy-m-0-1-15.1-5ZG</div>
<div class="t" style="left:1554px;top:344px;color:#6d6d6d">-</div>
<svg width="13" height="13" viewBox="0 0 13 13" style="position:absolute;left:1834px;top:345px"><rect x="0.5" y="0.5" width="12" height="12" fill="#fff" stroke="#333" stroke-width="1"/><path d="M2.5 6.5 L5 9 L10.5 3.5" fill="none" stroke="#333" stroke-width="1.2"/></svg>
<div style="position:absolute;left:988px;top:362px;width:1031px;height:18px;background:#0078d7"></div>
<div style="position:absolute;left:968px;top:380px;width:20px;height:1px;background:#e6e6e6"></div>
<div class="t" style="left:991px;top:363px;color:#6d6d6d">00 Architektur\Flächenerfassung</div>
<div class="t" style="left:1273px;top:363px;color:#6d6d6d">kpy-m-0-1-18-8OG</div>
<div class="t" style="left:1554px;top:363px;color:#6d6d6d">-</div>
<svg width="13" height="13" viewBox="0 0 13 13" style="position:absolute;left:1834px;top:364px"><rect x="0.5" y="0.5" width="12" height="12" fill="#fff" stroke="#333" stroke-width="1"/><path d="M2.5 6.5 L5 9 L10.5 3.5" fill="none" stroke="#333" stroke-width="1.2"/></svg>
<div style="position:absolute;left:988px;top:381px;width:1031px;height:18px;background:#0078d7"></div>
<div style="position:absolute;left:968px;top:399px;width:20px;height:1px;background:#e6e6e6"></div>
<div class="t" style="left:991px;top:382px;color:#6d6d6d">00 Architektur\Flächenerfassung</div>
<div class="t" style="left:1273px;top:382px;color:#6d6d6d">kpy-m-0-1-07.1 3ZG</div>
<div class="t" style="left:1554px;top:382px;color:#6d6d6d">-</div>
<svg width="13" height="13" viewBox="0 0 13 13" style="position:absolute;left:1834px;top:383px"><rect x="0.5" y="0.5" width="12" height="12" fill="#fff" stroke="#333" stroke-width="1"/><path d="M2.5 6.5 L5 9 L10.5 3.5" fill="none" stroke="#333" stroke-width="1.2"/></svg>
<div style="position:absolute;left:988px;top:400px;width:1031px;height:18px;background:#0078d7"></div>
<div style="position:absolute;left:968px;top:418px;width:20px;height:1px;background:#e6e6e6"></div>
<div class="t" style="left:991px;top:401px;color:#6d6d6d">00 Architektur\Flächenerfassung</div>
<div class="t" style="left:1273px;top:401px;color:#6d6d6d">kpy-m-0-1-16 6OG</div>
<div class="t" style="left:1554px;top:401px;color:#6d6d6d">-</div>
<svg width="13" height="13" viewBox="0 0 13 13" style="position:absolute;left:1834px;top:402px"><rect x="0.5" y="0.5" width="12" height="12" fill="#fff" stroke="#333" stroke-width="1"/><path d="M2.5 6.5 L5 9 L10.5 3.5" fill="none" stroke="#333" stroke-width="1.2"/></svg>
<div style="position:absolute;left:988px;top:419px;width:1031px;height:18px;background:#0078d7"></div>
<div style="position:absolute;left:968px;top:437px;width:20px;height:1px;background:#e6e6e6"></div>
<div class="t" style="left:991px;top:420px;color:#6d6d6d">00 Architektur\Flächenerfassung\Aufteilung Lüftu...</div>
<div class="t" style="left:1273px;top:420px;color:#6d6d6d">kpy-m-0-1-18-8OG</div>
<div class="t" style="left:1554px;top:420px;color:#6d6d6d">-</div>
<svg width="13" height="13" viewBox="0 0 13 13" style="position:absolute;left:1834px;top:421px"><rect x="0.5" y="0.5" width="12" height="12" fill="#fff" stroke="#333" stroke-width="1"/><path d="M2.5 6.5 L5 9 L10.5 3.5" fill="none" stroke="#333" stroke-width="1.2"/></svg>
<div style="position:absolute;left:988px;top:438px;width:1031px;height:18px;background:#0078d7"></div>
<div style="position:absolute;left:968px;top:456px;width:20px;height:1px;background:#e6e6e6"></div>
<div class="t" style="left:991px;top:439px;color:#6d6d6d">00 Architektur\Flächenerfassung\Aufteilung Lüftu...</div>
<div class="t" style="left:1273px;top:439px;color:#6d6d6d">kpy-m-0-1-08 2UG</div>
<div class="t" style="left:1554px;top:439px;color:#6d6d6d">-</div>
<svg width="13" height="13" viewBox="0 0 13 13" style="position:absolute;left:1834px;top:440px"><rect x="0.5" y="0.5" width="12" height="12" fill="#fff" stroke="#333" stroke-width="1"/><path d="M2.5 6.5 L5 9 L10.5 3.5" fill="none" stroke="#333" stroke-width="1.2"/></svg>
<div style="position:absolute;left:988px;top:457px;width:1031px;height:18px;background:#0078d7"></div>
<div style="position:absolute;left:968px;top:475px;width:20px;height:1px;background:#e6e6e6"></div>
<div class="t" style="left:991px;top:458px;color:#6d6d6d">00 Architektur\Flächenerfassung\Aufteilung Lüftu...</div>
<div class="t" style="left:1273px;top:458px;color:#6d6d6d">kpy-m-0-1-13 3OG</div>
<div class="t" style="left:1554px;top:458px;color:#6d6d6d">-</div>
<svg width="13" height="13" viewBox="0 0 13 13" style="position:absolute;left:1834px;top:459px"><rect x="0.5" y="0.5" width="12" height="12" fill="#fff" stroke="#333" stroke-width="1"/><path d="M2.5 6.5 L5 9 L10.5 3.5" fill="none" stroke="#333" stroke-width="1.2"/></svg>
<div style="position:absolute;left:988px;top:476px;width:1031px;height:18px;background:#0078d7"></div>
<div style="position:absolute;left:968px;top:494px;width:20px;height:1px;background:#e6e6e6"></div>
<div class="t" style="left:991px;top:477px;color:#6d6d6d">00 Architektur\Flächenerfassung\Aufteilung Lüftu...</div>
<div class="t" style="left:1273px;top:477px;color:#6d6d6d">kpy-m-0-1-10 EG</div>
<div class="t" style="left:1554px;top:477px;color:#6d6d6d">-</div>
<svg width="13" height="13" viewBox="0 0 13 13" style="position:absolute;left:1834px;top:478px"><rect x="0.5" y="0.5" width="12" height="12" fill="#fff" stroke="#333" stroke-width="1"/><path d="M2.5 6.5 L5 9 L10.5 3.5" fill="none" stroke="#333" stroke-width="1.2"/></svg>
<div style="position:absolute;left:988px;top:495px;width:1031px;height:18px;background:#0078d7"></div>
<div style="position:absolute;left:968px;top:513px;width:20px;height:1px;background:#e6e6e6"></div>
<div class="t" style="left:991px;top:496px;color:#6d6d6d">00 Architektur\Flächenerfassung\Aufteilung Lüftu...</div>
<div class="t" style="left:1273px;top:496px;color:#6d6d6d">kpy-m-0-1-07 3UG</div>
<div class="t" style="left:1554px;top:496px;color:#6d6d6d">-</div>
<svg width="13" height="13" viewBox="0 0 13 13" style="position:absolute;left:1834px;top:497px"><rect x="0.5" y="0.5" width="12" height="12" fill="#fff" stroke="#333" stroke-width="1"/><path d="M2.5 6.5 L5 9 L10.5 3.5" fill="none" stroke="#333" stroke-width="1.2"/></svg>
<div style="position:absolute;left:988px;top:514px;width:1031px;height:18px;background:#0078d7"></div>
<div style="position:absolute;left:968px;top:532px;width:20px;height:1px;background:#e6e6e6"></div>
<div class="t" style="left:991px;top:515px;color:#6d6d6d">00 Architektur\Flächenerfassung\Aufteilung Lüftu...</div>
<div class="t" style="left:1273px;top:515px;color:#6d6d6d">kpy-m-0-1-19-9OG</div>
<div class="t" style="left:1554px;top:515px;color:#6d6d6d">-</div>
<svg width="13" height="13" viewBox="0 0 13 13" style="position:absolute;left:1834px;top:516px"><rect x="0.5" y="0.5" width="12" height="12" fill="#fff" stroke="#333" stroke-width="1"/><path d="M2.5 6.5 L5 9 L10.5 3.5" fill="none" stroke="#333" stroke-width="1.2"/></svg>
<div style="position:absolute;left:988px;top:533px;width:1031px;height:18px;background:#0078d7"></div>
<div style="position:absolute;left:968px;top:551px;width:20px;height:1px;background:#e6e6e6"></div>
<div class="t" style="left:991px;top:534px;color:#6d6d6d">00 Architektur\Flächenerfassung\Aufteilung Lüftu...</div>
<div class="t" style="left:1273px;top:534px;color:#6d6d6d">kpy-m-0-1-12 2OG</div>
<div class="t" style="left:1554px;top:534px;color:#6d6d6d">-</div>
<svg width="13" height="13" viewBox="0 0 13 13" style="position:absolute;left:1834px;top:535px"><rect x="0.5" y="0.5" width="12" height="12" fill="#fff" stroke="#333" stroke-width="1"/><path d="M2.5 6.5 L5 9 L10.5 3.5" fill="none" stroke="#333" stroke-width="1.2"/></svg>
<div style="position:absolute;left:988px;top:552px;width:1031px;height:18px;background:#0078d7"></div>
<div style="position:absolute;left:968px;top:570px;width:20px;height:1px;background:#e6e6e6"></div>
<div class="t" style="left:991px;top:553px;color:#6d6d6d">00 Architektur\Flächenerfassung\Aufteilung Lüftu...</div>
<div class="t" style="left:1273px;top:553px;color:#6d6d6d">kpy-m-0-1-15 5OG</div>
<div class="t" style="left:1554px;top:553px;color:#6d6d6d">-</div>
<svg width="13" height="13" viewBox="0 0 13 13" style="position:absolute;left:1834px;top:554px"><rect x="0.5" y="0.5" width="12" height="12" fill="#fff" stroke="#333" stroke-width="1"/><path d="M2.5 6.5 L5 9 L10.5 3.5" fill="none" stroke="#333" stroke-width="1.2"/></svg>
<div style="position:absolute;left:988px;top:571px;width:1031px;height:18px;background:#0078d7"></div>
<div style="position:absolute;left:968px;top:589px;width:20px;height:1px;background:#e6e6e6"></div>
<div class="t" style="left:991px;top:572px;color:#6d6d6d">00 Architektur\Flächenerfassung\Aufteilung Lüftu...</div>
<div class="t" style="left:1273px;top:572px;color:#6d6d6d">kpy-m-0-1-15.1-5ZG</div>
<div class="t" style="left:1554px;top:572px;color:#6d6d6d">-</div>
<svg width="13" height="13" viewBox="0 0 13 13" style="position:absolute;left:1834px;top:573px"><rect x="0.5" y="0.5" width="12" height="12" fill="#fff" stroke="#333" stroke-width="1"/><path d="M2.5 6.5 L5 9 L10.5 3.5" fill="none" stroke="#333" stroke-width="1.2"/></svg>
<div style="position:absolute;left:988px;top:590px;width:1031px;height:18px;background:#0078d7"></div>
<div style="position:absolute;left:968px;top:608px;width:20px;height:1px;background:#e6e6e6"></div>
<div class="t" style="left:991px;top:591px;color:#6d6d6d">00 Architektur\Flächenerfassung\Aufteilung Lüftu...</div>
<div class="t" style="left:1273px;top:591px;color:#6d6d6d">kpy-m-0-1-07.1 3ZG</div>
<div class="t" style="left:1554px;top:591px;color:#6d6d6d">-</div>
<svg width="13" height="13" viewBox="0 0 13 13" style="position:absolute;left:1834px;top:592px"><rect x="0.5" y="0.5" width="12" height="12" fill="#fff" stroke="#333" stroke-width="1"/><path d="M2.5 6.5 L5 9 L10.5 3.5" fill="none" stroke="#333" stroke-width="1.2"/></svg>
<div style="position:absolute;left:988px;top:609px;width:1031px;height:18px;background:#0078d7"></div>
<div style="position:absolute;left:968px;top:627px;width:20px;height:1px;background:#e6e6e6"></div>
<div class="t" style="left:991px;top:610px;color:#6d6d6d">00 Architektur\Flächenerfassung\Aufteilung Lüftu...</div>
<div class="t" style="left:1273px;top:610px;color:#6d6d6d">kpy-m-0-1-09 1UG</div>
<div class="t" style="left:1554px;top:610px;color:#6d6d6d">-</div>
<svg width="13" height="13" viewBox="0 0 13 13" style="position:absolute;left:1834px;top:611px"><rect x="0.5" y="0.5" width="12" height="12" fill="#fff" stroke="#333" stroke-width="1"/><path d="M2.5 6.5 L5 9 L10.5 3.5" fill="none" stroke="#333" stroke-width="1.2"/></svg>
<div style="position:absolute;left:988px;top:628px;width:1031px;height:18px;background:#0078d7"></div>
<div style="position:absolute;left:968px;top:646px;width:20px;height:1px;background:#e6e6e6"></div>
<div class="t" style="left:991px;top:629px;color:#6d6d6d">00 Architektur\Flächenerfassung\Aufteilung Lüftu...</div>
<div class="t" style="left:1273px;top:629px;color:#6d6d6d">kpy-m-0-1-14 4OGg</div>
<div class="t" style="left:1554px;top:629px;color:#6d6d6d">-</div>
<svg width="13" height="13" viewBox="0 0 13 13" style="position:absolute;left:1834px;top:630px"><rect x="0.5" y="0.5" width="12" height="12" fill="#fff" stroke="#333" stroke-width="1"/><path d="M2.5 6.5 L5 9 L10.5 3.5" fill="none" stroke="#333" stroke-width="1.2"/></svg>
<div style="position:absolute;left:988px;top:647px;width:1031px;height:18px;background:#0078d7"></div>
<div style="position:absolute;left:968px;top:665px;width:20px;height:1px;background:#e6e6e6"></div>
<div class="t" style="left:991px;top:648px;color:#6d6d6d">00 Architektur\Flächenerfassung\Aufteilung Lüftu...</div>
<div class="t" style="left:1273px;top:648px;color:#6d6d6d">kpy-m-0-1-16 6OG</div>
<div class="t" style="left:1554px;top:648px;color:#6d6d6d">-</div>
<svg width="13" height="13" viewBox="0 0 13 13" style="position:absolute;left:1834px;top:649px"><rect x="0.5" y="0.5" width="12" height="12" fill="#fff" stroke="#333" stroke-width="1"/><path d="M2.5 6.5 L5 9 L10.5 3.5" fill="none" stroke="#333" stroke-width="1.2"/></svg>
<div style="position:absolute;left:988px;top:666px;width:1031px;height:18px;background:#0078d7"></div>
<div style="position:absolute;left:968px;top:684px;width:20px;height:1px;background:#e6e6e6"></div>
<div class="t" style="left:991px;top:667px;color:#6d6d6d">00 Architektur\Flächenerfassung\Aufteilung Lüftu...</div>
<div class="t" style="left:1273px;top:667px;color:#6d6d6d">kpy-m-0-1-17 7OG</div>
<div class="t" style="left:1554px;top:667px;color:#6d6d6d">-</div>
<svg width="13" height="13" viewBox="0 0 13 13" style="position:absolute;left:1834px;top:668px"><rect x="0.5" y="0.5" width="12" height="12" fill="#fff" stroke="#333" stroke-width="1"/><path d="M2.5 6.5 L5 9 L10.5 3.5" fill="none" stroke="#333" stroke-width="1.2"/></svg>
<div style="position:absolute;left:988px;top:685px;width:1031px;height:18px;background:#0078d7"></div>
<div style="position:absolute;left:968px;top:703px;width:20px;height:1px;background:#e6e6e6"></div>
<div class="t" style="left:991px;top:686px;color:#6d6d6d">00 Architektur\Flächenerfassung\Aufteilung Lüftu...</div>
<div class="t" style="left:1273px;top:686px;color:#6d6d6d">kpy-m-0-1-11 1OG</div>
<div class="t" style="left:1554px;top:686px;color:#6d6d6d">-</div>
<svg width="13" height="13" viewBox="0 0 13 13" style="position:absolute;left:1834px;top:687px"><rect x="0.5" y="0.5" width="12" height="12" fill="#fff" stroke="#333" stroke-width="1"/><path d="M2.5 6.5 L5 9 L10.5 3.5" fill="none" stroke="#333" stroke-width="1.2"/></svg>
<div style="position:absolute;left:988px;top:704px;width:1031px;height:18px;background:#0078d7"></div>
<div style="position:absolute;left:968px;top:722px;width:20px;height:1px;background:#e6e6e6"></div>
<div class="t" style="left:991px;top:705px;color:#6d6d6d">00 Architektur\Achsen</div>
<div class="t" style="left:1273px;top:705px;color:#6d6d6d">kpy-m-0-1-16 6OG</div>
<div class="t" style="left:1554px;top:705px;color:#6d6d6d">-</div>
<svg width="13" height="13" viewBox="0 0 13 13" style="position:absolute;left:1834px;top:706px"><rect x="0.5" y="0.5" width="12" height="12" fill="#fff" stroke="#333" stroke-width="1"/><path d="M2.5 6.5 L5 9 L10.5 3.5" fill="none" stroke="#333" stroke-width="1.2"/></svg>
<div style="position:absolute;left:988px;top:723px;width:1031px;height:18px;background:#0078d7"></div>
<div style="position:absolute;left:968px;top:741px;width:20px;height:1px;background:#e6e6e6"></div>
<div class="t" style="left:991px;top:724px;color:#6d6d6d">01 Heizung</div>
<div class="t" style="left:1273px;top:724px;color:#6d6d6d">kpy-m-1-0-08 2UG</div>
<div class="t" style="left:1554px;top:724px;color:#6d6d6d">-</div>
<svg width="13" height="13" viewBox="0 0 13 13" style="position:absolute;left:1834px;top:725px"><rect x="0.5" y="0.5" width="12" height="12" fill="#fff" stroke="#333" stroke-width="1"/><path d="M2.5 6.5 L5 9 L10.5 3.5" fill="none" stroke="#333" stroke-width="1.2"/></svg>
<div style="position:absolute;left:988px;top:742px;width:1031px;height:18px;background:#0078d7"></div>
<div style="position:absolute;left:968px;top:760px;width:20px;height:1px;background:#e6e6e6"></div>
<div class="t" style="left:991px;top:743px;color:#6d6d6d">01 Heizung</div>
<div class="t" style="left:1273px;top:743px;color:#6d6d6d">kpy-m-1-0-09 1UG</div>
<div class="t" style="left:1554px;top:743px;color:#6d6d6d">-</div>
<svg width="13" height="13" viewBox="0 0 13 13" style="position:absolute;left:1834px;top:744px"><rect x="0.5" y="0.5" width="12" height="12" fill="#fff" stroke="#333" stroke-width="1"/><path d="M2.5 6.5 L5 9 L10.5 3.5" fill="none" stroke="#333" stroke-width="1.2"/></svg>
<div style="position:absolute;left:988px;top:761px;width:1031px;height:18px;background:#0078d7"></div>
<div style="position:absolute;left:968px;top:779px;width:20px;height:1px;background:#e6e6e6"></div>
<div class="t" style="left:991px;top:762px;color:#6d6d6d">01 Heizung</div>
<div class="t" style="left:1273px;top:762px;color:#6d6d6d">kpy-m-1-0-10 EG</div>
<div class="t" style="left:1554px;top:762px;color:#6d6d6d">-</div>
<svg width="13" height="13" viewBox="0 0 13 13" style="position:absolute;left:1834px;top:763px"><rect x="0.5" y="0.5" width="12" height="12" fill="#fff" stroke="#333" stroke-width="1"/><path d="M2.5 6.5 L5 9 L10.5 3.5" fill="none" stroke="#333" stroke-width="1.2"/></svg>
<div style="position:absolute;left:988px;top:780px;width:1031px;height:18px;background:#0078d7"></div>
<div style="position:absolute;left:968px;top:798px;width:20px;height:1px;background:#e6e6e6"></div>
<div class="t" style="left:991px;top:781px;color:#6d6d6d">01 Heizung</div>
<div class="t" style="left:1273px;top:781px;color:#6d6d6d">kpy-m-1-0-11 1OG</div>
<div class="t" style="left:1554px;top:781px;color:#6d6d6d">-</div>
<svg width="13" height="13" viewBox="0 0 13 13" style="position:absolute;left:1834px;top:782px"><rect x="0.5" y="0.5" width="12" height="12" fill="#fff" stroke="#333" stroke-width="1"/><path d="M2.5 6.5 L5 9 L10.5 3.5" fill="none" stroke="#333" stroke-width="1.2"/></svg>
<div style="position:absolute;left:988px;top:799px;width:1031px;height:8px;background:#0078d7"></div>
<div style="position:absolute;left:968px;top:817px;width:20px;height:1px;background:#e6e6e6"></div>
<div class="t" style="left:991px;top:800px;color:#6d6d6d">01 Heizung</div>
<div class="t" style="left:1273px;top:800px;color:#6d6d6d">kpy-m-1-0-12 2OG</div>
<div class="t" style="left:1554px;top:800px;color:#6d6d6d">-</div>
<svg width="13" height="13" viewBox="0 0 13 13" style="position:absolute;left:1834px;top:801px"><rect x="0.5" y="0.5" width="12" height="12" fill="#fff" stroke="#333" stroke-width="1"/><path d="M2.5 6.5 L5 9 L10.5 3.5" fill="none" stroke="#333" stroke-width="1.2"/></svg>
<div style="position:absolute;left:1268px;top:134px;width:1px;height:673px;background:#fff"></div>
<div style="position:absolute;left:1550px;top:134px;width:1px;height:673px;background:#fff"></div>
<div style="position:absolute;left:1831px;top:134px;width:1px;height:673px;background:#fff"></div>
</div>
<svg width="10" height="10" style="position:absolute;left:974px;top:138px"><path d="M1 0 L6 4.5 L1 9Z" fill="#000"/></svg>
<div style="position:absolute;left:2020px;top:114px;width:17px;height:693px;background:#f0f0f0;border-left:1px solid #fff;box-sizing:border-box"></div>
<div style="position:absolute;left:2021px;top:131px;width:15px;height:175px;background:#cdcdcd"></div>
<svg width="10" height="8" style="position:absolute;left:2024px;top:119px"><path d="M1.2 6.5 L4.5 2.5 L7.8 6.5" fill="none" stroke="#606060" stroke-width="2"/></svg>
<svg width="10" height="8" style="position:absolute;left:2024px;top:795px"><path d="M1.2 1.5 L4.5 5.5 L7.8 1.5" fill="none" stroke="#606060" stroke-width="2"/></svg>
<div style="position:absolute;left:981px;top:81px;width:51px;height:21px;border:5px solid #e60000"></div>
<div style="position:absolute;left:964px;top:114px;width:26px;height:12px;border:5px solid #e60000"></div>
<div style="position:absolute;left:1826px;top:118px;width:29px;height:683px;border:5px solid #e60000"></div>
<div style="position:absolute;left:1887px;top:824px;width:51px;height:26px;background:#e1e1e1;border:2px solid #0078d7;box-sizing:border-box"></div>
<svg width="16" height="16" viewBox="0 0 16 16" style="position:absolute;left:1892px;top:829px"><circle cx="7.5" cy="7.5" r="7.4" fill="#0a3f7a"/><path d="M2.8 8.2 L6 11 L12 4.8" fill="none" stroke="#f8c000" stroke-width="2.3"/></svg>
<div class="t" style="left:1912px;top:829px;color:#000">OK</div>
<div style="position:absolute;left:1945px;top:824px;width:93px;height:26px;background:#e1e1e1;border:1px solid #adadad;box-sizing:border-box"></div>
<svg width="16" height="16" viewBox="0 0 16 16" style="position:absolute;left:1950px;top:829px"><circle cx="7.5" cy="7.5" r="7.4" fill="#0a3f7a"/><path d="M4.5 4.5 L10.5 10.5 M10.5 4.5 L4.5 10.5" fill="none" stroke="#f8c000" stroke-width="2.4"/></svg>
<div class="t" style="left:1970px;top:829px;color:#000">Abbrechen</div>
<svg width="12" height="12" viewBox="0 0 12 12" style="position:absolute;left:2034px;top:845px"><path d="M11 3 L3 11 M11 7 L7 11" stroke="#b8b8b8" stroke-width="1.2"/><path d="M11 4 L4 11 M11 8 L8 11" stroke="#fff" stroke-width="1"/></svg>
</body></html>
